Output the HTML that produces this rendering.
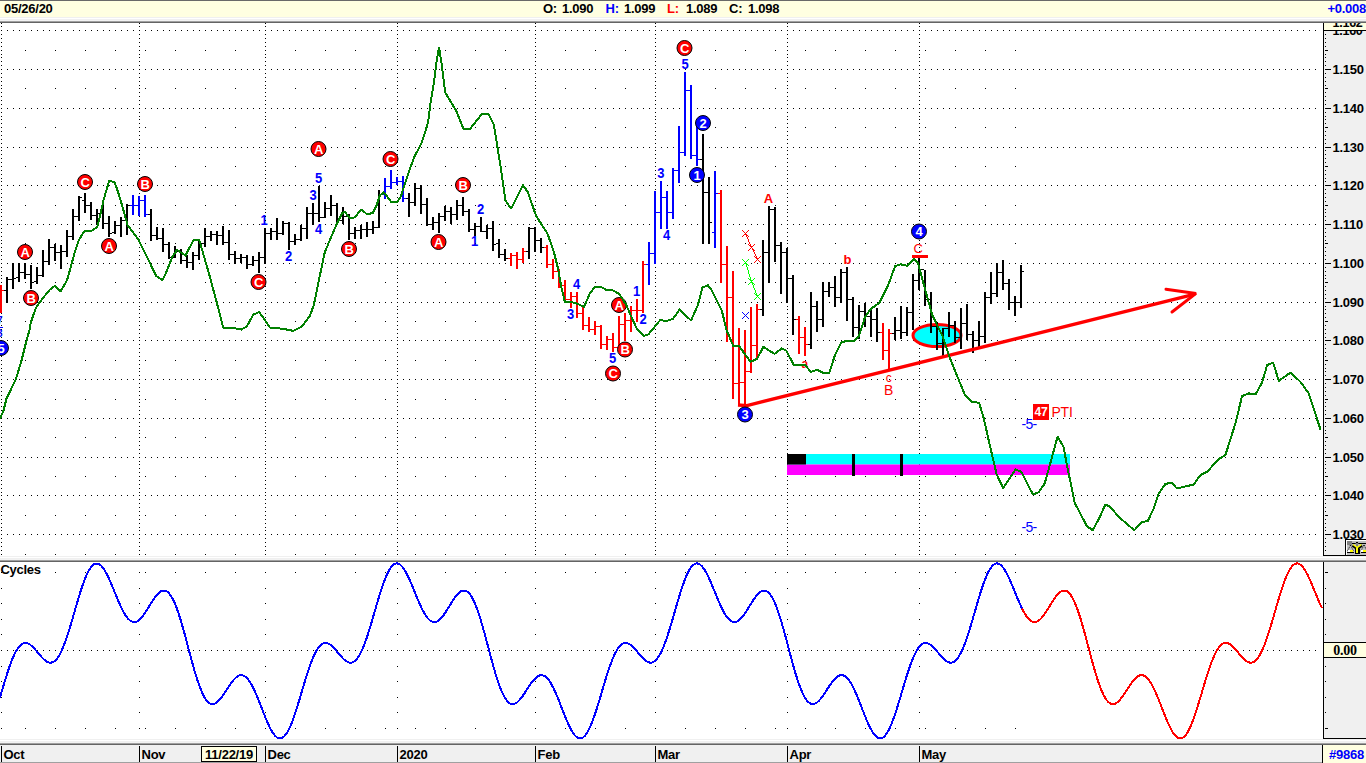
<!DOCTYPE html>
<html><head><meta charset="utf-8"><title>Chart</title>
<style>
html,body{margin:0;padding:0;background:#fff;}
body{width:1366px;height:763px;position:relative;overflow:hidden;font-family:"Liberation Sans",sans-serif;font-size:13px;letter-spacing:-0.25px;font-weight:bold;color:#000;}
.abs{position:absolute;}
#hdr{left:0;top:0;width:1366px;height:17px;background:#ffffe1;border-top:1px solid #696969;box-sizing:border-box;}
#hdr span{position:absolute;top:0.3px;line-height:15px;white-space:pre;}
.sep{position:absolute;left:0;width:1366px;}
.mt{position:absolute;top:746px;width:1px;height:16px;background:#000;}
.ml{position:absolute;top:747px;line-height:16px;}
</style></head><body>
<div id="hdr" class="abs">
<span style="left:4px">05/26/20</span>
<span style="left:543px">O:</span><span style="left:562px">1.090</span>
<span style="left:605.5px;color:#00f">H:</span><span style="left:624px">1.099</span>
<span style="left:667px;color:#f00">L:</span><span style="left:686px">1.089</span>
<span style="left:729px">C:</span><span style="left:748px">1.098</span>
<span style="right:0px;color:#00f">+0.008</span>
</div>
<div class="sep" style="top:17px;height:1px;background:#f0f0f0"></div><div class="sep" style="top:18px;height:1px;background:#fff"></div><div class="sep" style="top:19px;height:1px;background:#f0f0f0"></div><div class="sep" style="top:20px;height:1px;background:#f2f2f2"></div><div class="sep" style="top:21px;height:1px;background:#a0a0a0"></div><div class="sep" style="top:22px;height:1px;background:#646464"></div>
<svg width="1366" height="763" viewBox="0 0 1366 763" style="position:absolute;left:0;top:0" font-family="Liberation Sans, sans-serif"><g shape-rendering="crispEdges"><line x1="1" x2="1316" y1="30.5" y2="30.5" stroke="#000" stroke-width="1" stroke-dasharray="1 5"/><line x1="1" x2="1316" y1="69.5" y2="69.5" stroke="#000" stroke-width="1" stroke-dasharray="1 5"/><line x1="1" x2="1316" y1="108.5" y2="108.5" stroke="#000" stroke-width="1" stroke-dasharray="1 5"/><line x1="1" x2="1316" y1="147.5" y2="147.5" stroke="#000" stroke-width="1" stroke-dasharray="1 5"/><line x1="1" x2="1316" y1="185.5" y2="185.5" stroke="#000" stroke-width="1" stroke-dasharray="1 5"/><line x1="1" x2="1316" y1="224.5" y2="224.5" stroke="#000" stroke-width="1" stroke-dasharray="1 5"/><line x1="1" x2="1316" y1="263.5" y2="263.5" stroke="#000" stroke-width="1" stroke-dasharray="1 5"/><line x1="1" x2="1316" y1="302.5" y2="302.5" stroke="#000" stroke-width="1" stroke-dasharray="1 5"/><line x1="1" x2="1316" y1="340.5" y2="340.5" stroke="#000" stroke-width="1" stroke-dasharray="1 5"/><line x1="1" x2="1316" y1="379.5" y2="379.5" stroke="#000" stroke-width="1" stroke-dasharray="1 5"/><line x1="1" x2="1316" y1="418.5" y2="418.5" stroke="#000" stroke-width="1" stroke-dasharray="1 5"/><line x1="1" x2="1316" y1="457.5" y2="457.5" stroke="#000" stroke-width="1" stroke-dasharray="1 5"/><line x1="1" x2="1316" y1="495.5" y2="495.5" stroke="#000" stroke-width="1" stroke-dasharray="1 5"/><line x1="1" x2="1316" y1="534.5" y2="534.5" stroke="#000" stroke-width="1" stroke-dasharray="1 5"/><line x1="1" x2="1316" y1="650.5" y2="650.5" stroke="#000" stroke-width="1" stroke-dasharray="1 5"/><path d="M1 23h1v1h-1zM1 26h1v1h-1zM1 30h1v1h-1zM1 34h1v1h-1zM1 38h1v1h-1zM1 42h1v1h-1zM1 46h1v1h-1zM1 50h1v1h-1zM1 54h1v1h-1zM1 57h1v1h-1zM1 61h1v1h-1zM1 65h1v1h-1zM1 69h1v1h-1zM1 73h1v1h-1zM1 77h1v1h-1zM1 81h1v1h-1zM1 85h1v1h-1zM1 88h1v1h-1zM1 92h1v1h-1zM1 96h1v1h-1zM1 100h1v1h-1zM1 104h1v1h-1zM1 108h1v1h-1zM1 112h1v1h-1zM1 116h1v1h-1zM1 119h1v1h-1zM1 123h1v1h-1zM1 127h1v1h-1zM1 131h1v1h-1zM1 135h1v1h-1zM1 139h1v1h-1zM1 143h1v1h-1zM1 147h1v1h-1zM1 150h1v1h-1zM1 154h1v1h-1zM1 158h1v1h-1zM1 162h1v1h-1zM1 166h1v1h-1zM1 170h1v1h-1zM1 174h1v1h-1zM1 178h1v1h-1zM1 181h1v1h-1zM1 185h1v1h-1zM1 189h1v1h-1zM1 193h1v1h-1zM1 197h1v1h-1zM1 201h1v1h-1zM1 205h1v1h-1zM1 209h1v1h-1zM1 212h1v1h-1zM1 216h1v1h-1zM1 220h1v1h-1zM1 224h1v1h-1zM1 228h1v1h-1zM1 232h1v1h-1zM1 236h1v1h-1zM1 240h1v1h-1zM1 243h1v1h-1zM1 247h1v1h-1zM1 251h1v1h-1zM1 255h1v1h-1zM1 259h1v1h-1zM1 263h1v1h-1zM1 267h1v1h-1zM1 271h1v1h-1zM1 275h1v1h-1zM1 278h1v1h-1zM1 282h1v1h-1zM1 286h1v1h-1zM1 290h1v1h-1zM1 294h1v1h-1zM1 298h1v1h-1zM1 302h1v1h-1zM1 306h1v1h-1zM1 309h1v1h-1zM1 313h1v1h-1zM1 317h1v1h-1zM1 321h1v1h-1zM1 325h1v1h-1zM1 329h1v1h-1zM1 333h1v1h-1zM1 337h1v1h-1zM1 340h1v1h-1zM1 344h1v1h-1zM1 348h1v1h-1zM1 352h1v1h-1zM1 356h1v1h-1zM1 360h1v1h-1zM1 364h1v1h-1zM1 368h1v1h-1zM1 371h1v1h-1zM1 375h1v1h-1zM1 379h1v1h-1zM1 383h1v1h-1zM1 387h1v1h-1zM1 391h1v1h-1zM1 395h1v1h-1zM1 399h1v1h-1zM1 402h1v1h-1zM1 406h1v1h-1zM1 410h1v1h-1zM1 414h1v1h-1zM1 418h1v1h-1zM1 422h1v1h-1zM1 426h1v1h-1zM1 430h1v1h-1zM1 433h1v1h-1zM1 437h1v1h-1zM1 441h1v1h-1zM1 445h1v1h-1zM1 449h1v1h-1zM1 453h1v1h-1zM1 457h1v1h-1zM1 461h1v1h-1zM1 464h1v1h-1zM1 468h1v1h-1zM1 472h1v1h-1zM1 476h1v1h-1zM1 480h1v1h-1zM1 484h1v1h-1zM1 488h1v1h-1zM1 492h1v1h-1zM1 495h1v1h-1zM1 499h1v1h-1zM1 503h1v1h-1zM1 507h1v1h-1zM1 511h1v1h-1zM1 515h1v1h-1zM1 519h1v1h-1zM1 523h1v1h-1zM1 527h1v1h-1zM1 530h1v1h-1zM1 534h1v1h-1zM1 538h1v1h-1zM1 542h1v1h-1zM1 546h1v1h-1zM1 550h1v1h-1zM1 554h1v1h-1zM1 572h1v1h-1zM1 588h1v1h-1zM1 603h1v1h-1zM1 619h1v1h-1zM1 634h1v1h-1zM1 650h1v1h-1zM1 666h1v1h-1zM1 681h1v1h-1zM1 697h1v1h-1zM1 712h1v1h-1zM1 728h1v1h-1zM139 23h1v1h-1zM139 26h1v1h-1zM139 30h1v1h-1zM139 34h1v1h-1zM139 38h1v1h-1zM139 42h1v1h-1zM139 46h1v1h-1zM139 50h1v1h-1zM139 54h1v1h-1zM139 57h1v1h-1zM139 61h1v1h-1zM139 65h1v1h-1zM139 69h1v1h-1zM139 73h1v1h-1zM139 77h1v1h-1zM139 81h1v1h-1zM139 85h1v1h-1zM139 88h1v1h-1zM139 92h1v1h-1zM139 96h1v1h-1zM139 100h1v1h-1zM139 104h1v1h-1zM139 108h1v1h-1zM139 112h1v1h-1zM139 116h1v1h-1zM139 119h1v1h-1zM139 123h1v1h-1zM139 127h1v1h-1zM139 131h1v1h-1zM139 135h1v1h-1zM139 139h1v1h-1zM139 143h1v1h-1zM139 147h1v1h-1zM139 150h1v1h-1zM139 154h1v1h-1zM139 158h1v1h-1zM139 162h1v1h-1zM139 166h1v1h-1zM139 170h1v1h-1zM139 174h1v1h-1zM139 178h1v1h-1zM139 181h1v1h-1zM139 185h1v1h-1zM139 189h1v1h-1zM139 193h1v1h-1zM139 197h1v1h-1zM139 201h1v1h-1zM139 205h1v1h-1zM139 209h1v1h-1zM139 212h1v1h-1zM139 216h1v1h-1zM139 220h1v1h-1zM139 224h1v1h-1zM139 228h1v1h-1zM139 232h1v1h-1zM139 236h1v1h-1zM139 240h1v1h-1zM139 243h1v1h-1zM139 247h1v1h-1zM139 251h1v1h-1zM139 255h1v1h-1zM139 259h1v1h-1zM139 263h1v1h-1zM139 267h1v1h-1zM139 271h1v1h-1zM139 275h1v1h-1zM139 278h1v1h-1zM139 282h1v1h-1zM139 286h1v1h-1zM139 290h1v1h-1zM139 294h1v1h-1zM139 298h1v1h-1zM139 302h1v1h-1zM139 306h1v1h-1zM139 309h1v1h-1zM139 313h1v1h-1zM139 317h1v1h-1zM139 321h1v1h-1zM139 325h1v1h-1zM139 329h1v1h-1zM139 333h1v1h-1zM139 337h1v1h-1zM139 340h1v1h-1zM139 344h1v1h-1zM139 348h1v1h-1zM139 352h1v1h-1zM139 356h1v1h-1zM139 360h1v1h-1zM139 364h1v1h-1zM139 368h1v1h-1zM139 371h1v1h-1zM139 375h1v1h-1zM139 379h1v1h-1zM139 383h1v1h-1zM139 387h1v1h-1zM139 391h1v1h-1zM139 395h1v1h-1zM139 399h1v1h-1zM139 402h1v1h-1zM139 406h1v1h-1zM139 410h1v1h-1zM139 414h1v1h-1zM139 418h1v1h-1zM139 422h1v1h-1zM139 426h1v1h-1zM139 430h1v1h-1zM139 433h1v1h-1zM139 437h1v1h-1zM139 441h1v1h-1zM139 445h1v1h-1zM139 449h1v1h-1zM139 453h1v1h-1zM139 457h1v1h-1zM139 461h1v1h-1zM139 464h1v1h-1zM139 468h1v1h-1zM139 472h1v1h-1zM139 476h1v1h-1zM139 480h1v1h-1zM139 484h1v1h-1zM139 488h1v1h-1zM139 492h1v1h-1zM139 495h1v1h-1zM139 499h1v1h-1zM139 503h1v1h-1zM139 507h1v1h-1zM139 511h1v1h-1zM139 515h1v1h-1zM139 519h1v1h-1zM139 523h1v1h-1zM139 527h1v1h-1zM139 530h1v1h-1zM139 534h1v1h-1zM139 538h1v1h-1zM139 542h1v1h-1zM139 546h1v1h-1zM139 550h1v1h-1zM139 554h1v1h-1zM139 572h1v1h-1zM139 588h1v1h-1zM139 603h1v1h-1zM139 619h1v1h-1zM139 634h1v1h-1zM139 650h1v1h-1zM139 666h1v1h-1zM139 681h1v1h-1zM139 697h1v1h-1zM139 712h1v1h-1zM139 728h1v1h-1zM265 23h1v1h-1zM265 26h1v1h-1zM265 30h1v1h-1zM265 34h1v1h-1zM265 38h1v1h-1zM265 42h1v1h-1zM265 46h1v1h-1zM265 50h1v1h-1zM265 54h1v1h-1zM265 57h1v1h-1zM265 61h1v1h-1zM265 65h1v1h-1zM265 69h1v1h-1zM265 73h1v1h-1zM265 77h1v1h-1zM265 81h1v1h-1zM265 85h1v1h-1zM265 88h1v1h-1zM265 92h1v1h-1zM265 96h1v1h-1zM265 100h1v1h-1zM265 104h1v1h-1zM265 108h1v1h-1zM265 112h1v1h-1zM265 116h1v1h-1zM265 119h1v1h-1zM265 123h1v1h-1zM265 127h1v1h-1zM265 131h1v1h-1zM265 135h1v1h-1zM265 139h1v1h-1zM265 143h1v1h-1zM265 147h1v1h-1zM265 150h1v1h-1zM265 154h1v1h-1zM265 158h1v1h-1zM265 162h1v1h-1zM265 166h1v1h-1zM265 170h1v1h-1zM265 174h1v1h-1zM265 178h1v1h-1zM265 181h1v1h-1zM265 185h1v1h-1zM265 189h1v1h-1zM265 193h1v1h-1zM265 197h1v1h-1zM265 201h1v1h-1zM265 205h1v1h-1zM265 209h1v1h-1zM265 212h1v1h-1zM265 216h1v1h-1zM265 220h1v1h-1zM265 224h1v1h-1zM265 228h1v1h-1zM265 232h1v1h-1zM265 236h1v1h-1zM265 240h1v1h-1zM265 243h1v1h-1zM265 247h1v1h-1zM265 251h1v1h-1zM265 255h1v1h-1zM265 259h1v1h-1zM265 263h1v1h-1zM265 267h1v1h-1zM265 271h1v1h-1zM265 275h1v1h-1zM265 278h1v1h-1zM265 282h1v1h-1zM265 286h1v1h-1zM265 290h1v1h-1zM265 294h1v1h-1zM265 298h1v1h-1zM265 302h1v1h-1zM265 306h1v1h-1zM265 309h1v1h-1zM265 313h1v1h-1zM265 317h1v1h-1zM265 321h1v1h-1zM265 325h1v1h-1zM265 329h1v1h-1zM265 333h1v1h-1zM265 337h1v1h-1zM265 340h1v1h-1zM265 344h1v1h-1zM265 348h1v1h-1zM265 352h1v1h-1zM265 356h1v1h-1zM265 360h1v1h-1zM265 364h1v1h-1zM265 368h1v1h-1zM265 371h1v1h-1zM265 375h1v1h-1zM265 379h1v1h-1zM265 383h1v1h-1zM265 387h1v1h-1zM265 391h1v1h-1zM265 395h1v1h-1zM265 399h1v1h-1zM265 402h1v1h-1zM265 406h1v1h-1zM265 410h1v1h-1zM265 414h1v1h-1zM265 418h1v1h-1zM265 422h1v1h-1zM265 426h1v1h-1zM265 430h1v1h-1zM265 433h1v1h-1zM265 437h1v1h-1zM265 441h1v1h-1zM265 445h1v1h-1zM265 449h1v1h-1zM265 453h1v1h-1zM265 457h1v1h-1zM265 461h1v1h-1zM265 464h1v1h-1zM265 468h1v1h-1zM265 472h1v1h-1zM265 476h1v1h-1zM265 480h1v1h-1zM265 484h1v1h-1zM265 488h1v1h-1zM265 492h1v1h-1zM265 495h1v1h-1zM265 499h1v1h-1zM265 503h1v1h-1zM265 507h1v1h-1zM265 511h1v1h-1zM265 515h1v1h-1zM265 519h1v1h-1zM265 523h1v1h-1zM265 527h1v1h-1zM265 530h1v1h-1zM265 534h1v1h-1zM265 538h1v1h-1zM265 542h1v1h-1zM265 546h1v1h-1zM265 550h1v1h-1zM265 554h1v1h-1zM265 572h1v1h-1zM265 588h1v1h-1zM265 603h1v1h-1zM265 619h1v1h-1zM265 634h1v1h-1zM265 650h1v1h-1zM265 666h1v1h-1zM265 681h1v1h-1zM265 697h1v1h-1zM265 712h1v1h-1zM265 728h1v1h-1zM397 23h1v1h-1zM397 26h1v1h-1zM397 30h1v1h-1zM397 34h1v1h-1zM397 38h1v1h-1zM397 42h1v1h-1zM397 46h1v1h-1zM397 50h1v1h-1zM397 54h1v1h-1zM397 57h1v1h-1zM397 61h1v1h-1zM397 65h1v1h-1zM397 69h1v1h-1zM397 73h1v1h-1zM397 77h1v1h-1zM397 81h1v1h-1zM397 85h1v1h-1zM397 88h1v1h-1zM397 92h1v1h-1zM397 96h1v1h-1zM397 100h1v1h-1zM397 104h1v1h-1zM397 108h1v1h-1zM397 112h1v1h-1zM397 116h1v1h-1zM397 119h1v1h-1zM397 123h1v1h-1zM397 127h1v1h-1zM397 131h1v1h-1zM397 135h1v1h-1zM397 139h1v1h-1zM397 143h1v1h-1zM397 147h1v1h-1zM397 150h1v1h-1zM397 154h1v1h-1zM397 158h1v1h-1zM397 162h1v1h-1zM397 166h1v1h-1zM397 170h1v1h-1zM397 174h1v1h-1zM397 178h1v1h-1zM397 181h1v1h-1zM397 185h1v1h-1zM397 189h1v1h-1zM397 193h1v1h-1zM397 197h1v1h-1zM397 201h1v1h-1zM397 205h1v1h-1zM397 209h1v1h-1zM397 212h1v1h-1zM397 216h1v1h-1zM397 220h1v1h-1zM397 224h1v1h-1zM397 228h1v1h-1zM397 232h1v1h-1zM397 236h1v1h-1zM397 240h1v1h-1zM397 243h1v1h-1zM397 247h1v1h-1zM397 251h1v1h-1zM397 255h1v1h-1zM397 259h1v1h-1zM397 263h1v1h-1zM397 267h1v1h-1zM397 271h1v1h-1zM397 275h1v1h-1zM397 278h1v1h-1zM397 282h1v1h-1zM397 286h1v1h-1zM397 290h1v1h-1zM397 294h1v1h-1zM397 298h1v1h-1zM397 302h1v1h-1zM397 306h1v1h-1zM397 309h1v1h-1zM397 313h1v1h-1zM397 317h1v1h-1zM397 321h1v1h-1zM397 325h1v1h-1zM397 329h1v1h-1zM397 333h1v1h-1zM397 337h1v1h-1zM397 340h1v1h-1zM397 344h1v1h-1zM397 348h1v1h-1zM397 352h1v1h-1zM397 356h1v1h-1zM397 360h1v1h-1zM397 364h1v1h-1zM397 368h1v1h-1zM397 371h1v1h-1zM397 375h1v1h-1zM397 379h1v1h-1zM397 383h1v1h-1zM397 387h1v1h-1zM397 391h1v1h-1zM397 395h1v1h-1zM397 399h1v1h-1zM397 402h1v1h-1zM397 406h1v1h-1zM397 410h1v1h-1zM397 414h1v1h-1zM397 418h1v1h-1zM397 422h1v1h-1zM397 426h1v1h-1zM397 430h1v1h-1zM397 433h1v1h-1zM397 437h1v1h-1zM397 441h1v1h-1zM397 445h1v1h-1zM397 449h1v1h-1zM397 453h1v1h-1zM397 457h1v1h-1zM397 461h1v1h-1zM397 464h1v1h-1zM397 468h1v1h-1zM397 472h1v1h-1zM397 476h1v1h-1zM397 480h1v1h-1zM397 484h1v1h-1zM397 488h1v1h-1zM397 492h1v1h-1zM397 495h1v1h-1zM397 499h1v1h-1zM397 503h1v1h-1zM397 507h1v1h-1zM397 511h1v1h-1zM397 515h1v1h-1zM397 519h1v1h-1zM397 523h1v1h-1zM397 527h1v1h-1zM397 530h1v1h-1zM397 534h1v1h-1zM397 538h1v1h-1zM397 542h1v1h-1zM397 546h1v1h-1zM397 550h1v1h-1zM397 554h1v1h-1zM397 572h1v1h-1zM397 588h1v1h-1zM397 603h1v1h-1zM397 619h1v1h-1zM397 634h1v1h-1zM397 650h1v1h-1zM397 666h1v1h-1zM397 681h1v1h-1zM397 697h1v1h-1zM397 712h1v1h-1zM397 728h1v1h-1zM535 23h1v1h-1zM535 26h1v1h-1zM535 30h1v1h-1zM535 34h1v1h-1zM535 38h1v1h-1zM535 42h1v1h-1zM535 46h1v1h-1zM535 50h1v1h-1zM535 54h1v1h-1zM535 57h1v1h-1zM535 61h1v1h-1zM535 65h1v1h-1zM535 69h1v1h-1zM535 73h1v1h-1zM535 77h1v1h-1zM535 81h1v1h-1zM535 85h1v1h-1zM535 88h1v1h-1zM535 92h1v1h-1zM535 96h1v1h-1zM535 100h1v1h-1zM535 104h1v1h-1zM535 108h1v1h-1zM535 112h1v1h-1zM535 116h1v1h-1zM535 119h1v1h-1zM535 123h1v1h-1zM535 127h1v1h-1zM535 131h1v1h-1zM535 135h1v1h-1zM535 139h1v1h-1zM535 143h1v1h-1zM535 147h1v1h-1zM535 150h1v1h-1zM535 154h1v1h-1zM535 158h1v1h-1zM535 162h1v1h-1zM535 166h1v1h-1zM535 170h1v1h-1zM535 174h1v1h-1zM535 178h1v1h-1zM535 181h1v1h-1zM535 185h1v1h-1zM535 189h1v1h-1zM535 193h1v1h-1zM535 197h1v1h-1zM535 201h1v1h-1zM535 205h1v1h-1zM535 209h1v1h-1zM535 212h1v1h-1zM535 216h1v1h-1zM535 220h1v1h-1zM535 224h1v1h-1zM535 228h1v1h-1zM535 232h1v1h-1zM535 236h1v1h-1zM535 240h1v1h-1zM535 243h1v1h-1zM535 247h1v1h-1zM535 251h1v1h-1zM535 255h1v1h-1zM535 259h1v1h-1zM535 263h1v1h-1zM535 267h1v1h-1zM535 271h1v1h-1zM535 275h1v1h-1zM535 278h1v1h-1zM535 282h1v1h-1zM535 286h1v1h-1zM535 290h1v1h-1zM535 294h1v1h-1zM535 298h1v1h-1zM535 302h1v1h-1zM535 306h1v1h-1zM535 309h1v1h-1zM535 313h1v1h-1zM535 317h1v1h-1zM535 321h1v1h-1zM535 325h1v1h-1zM535 329h1v1h-1zM535 333h1v1h-1zM535 337h1v1h-1zM535 340h1v1h-1zM535 344h1v1h-1zM535 348h1v1h-1zM535 352h1v1h-1zM535 356h1v1h-1zM535 360h1v1h-1zM535 364h1v1h-1zM535 368h1v1h-1zM535 371h1v1h-1zM535 375h1v1h-1zM535 379h1v1h-1zM535 383h1v1h-1zM535 387h1v1h-1zM535 391h1v1h-1zM535 395h1v1h-1zM535 399h1v1h-1zM535 402h1v1h-1zM535 406h1v1h-1zM535 410h1v1h-1zM535 414h1v1h-1zM535 418h1v1h-1zM535 422h1v1h-1zM535 426h1v1h-1zM535 430h1v1h-1zM535 433h1v1h-1zM535 437h1v1h-1zM535 441h1v1h-1zM535 445h1v1h-1zM535 449h1v1h-1zM535 453h1v1h-1zM535 457h1v1h-1zM535 461h1v1h-1zM535 464h1v1h-1zM535 468h1v1h-1zM535 472h1v1h-1zM535 476h1v1h-1zM535 480h1v1h-1zM535 484h1v1h-1zM535 488h1v1h-1zM535 492h1v1h-1zM535 495h1v1h-1zM535 499h1v1h-1zM535 503h1v1h-1zM535 507h1v1h-1zM535 511h1v1h-1zM535 515h1v1h-1zM535 519h1v1h-1zM535 523h1v1h-1zM535 527h1v1h-1zM535 530h1v1h-1zM535 534h1v1h-1zM535 538h1v1h-1zM535 542h1v1h-1zM535 546h1v1h-1zM535 550h1v1h-1zM535 554h1v1h-1zM535 572h1v1h-1zM535 588h1v1h-1zM535 603h1v1h-1zM535 619h1v1h-1zM535 634h1v1h-1zM535 650h1v1h-1zM535 666h1v1h-1zM535 681h1v1h-1zM535 697h1v1h-1zM535 712h1v1h-1zM535 728h1v1h-1zM655 23h1v1h-1zM655 26h1v1h-1zM655 30h1v1h-1zM655 34h1v1h-1zM655 38h1v1h-1zM655 42h1v1h-1zM655 46h1v1h-1zM655 50h1v1h-1zM655 54h1v1h-1zM655 57h1v1h-1zM655 61h1v1h-1zM655 65h1v1h-1zM655 69h1v1h-1zM655 73h1v1h-1zM655 77h1v1h-1zM655 81h1v1h-1zM655 85h1v1h-1zM655 88h1v1h-1zM655 92h1v1h-1zM655 96h1v1h-1zM655 100h1v1h-1zM655 104h1v1h-1zM655 108h1v1h-1zM655 112h1v1h-1zM655 116h1v1h-1zM655 119h1v1h-1zM655 123h1v1h-1zM655 127h1v1h-1zM655 131h1v1h-1zM655 135h1v1h-1zM655 139h1v1h-1zM655 143h1v1h-1zM655 147h1v1h-1zM655 150h1v1h-1zM655 154h1v1h-1zM655 158h1v1h-1zM655 162h1v1h-1zM655 166h1v1h-1zM655 170h1v1h-1zM655 174h1v1h-1zM655 178h1v1h-1zM655 181h1v1h-1zM655 185h1v1h-1zM655 189h1v1h-1zM655 193h1v1h-1zM655 197h1v1h-1zM655 201h1v1h-1zM655 205h1v1h-1zM655 209h1v1h-1zM655 212h1v1h-1zM655 216h1v1h-1zM655 220h1v1h-1zM655 224h1v1h-1zM655 228h1v1h-1zM655 232h1v1h-1zM655 236h1v1h-1zM655 240h1v1h-1zM655 243h1v1h-1zM655 247h1v1h-1zM655 251h1v1h-1zM655 255h1v1h-1zM655 259h1v1h-1zM655 263h1v1h-1zM655 267h1v1h-1zM655 271h1v1h-1zM655 275h1v1h-1zM655 278h1v1h-1zM655 282h1v1h-1zM655 286h1v1h-1zM655 290h1v1h-1zM655 294h1v1h-1zM655 298h1v1h-1zM655 302h1v1h-1zM655 306h1v1h-1zM655 309h1v1h-1zM655 313h1v1h-1zM655 317h1v1h-1zM655 321h1v1h-1zM655 325h1v1h-1zM655 329h1v1h-1zM655 333h1v1h-1zM655 337h1v1h-1zM655 340h1v1h-1zM655 344h1v1h-1zM655 348h1v1h-1zM655 352h1v1h-1zM655 356h1v1h-1zM655 360h1v1h-1zM655 364h1v1h-1zM655 368h1v1h-1zM655 371h1v1h-1zM655 375h1v1h-1zM655 379h1v1h-1zM655 383h1v1h-1zM655 387h1v1h-1zM655 391h1v1h-1zM655 395h1v1h-1zM655 399h1v1h-1zM655 402h1v1h-1zM655 406h1v1h-1zM655 410h1v1h-1zM655 414h1v1h-1zM655 418h1v1h-1zM655 422h1v1h-1zM655 426h1v1h-1zM655 430h1v1h-1zM655 433h1v1h-1zM655 437h1v1h-1zM655 441h1v1h-1zM655 445h1v1h-1zM655 449h1v1h-1zM655 453h1v1h-1zM655 457h1v1h-1zM655 461h1v1h-1zM655 464h1v1h-1zM655 468h1v1h-1zM655 472h1v1h-1zM655 476h1v1h-1zM655 480h1v1h-1zM655 484h1v1h-1zM655 488h1v1h-1zM655 492h1v1h-1zM655 495h1v1h-1zM655 499h1v1h-1zM655 503h1v1h-1zM655 507h1v1h-1zM655 511h1v1h-1zM655 515h1v1h-1zM655 519h1v1h-1zM655 523h1v1h-1zM655 527h1v1h-1zM655 530h1v1h-1zM655 534h1v1h-1zM655 538h1v1h-1zM655 542h1v1h-1zM655 546h1v1h-1zM655 550h1v1h-1zM655 554h1v1h-1zM655 572h1v1h-1zM655 588h1v1h-1zM655 603h1v1h-1zM655 619h1v1h-1zM655 634h1v1h-1zM655 650h1v1h-1zM655 666h1v1h-1zM655 681h1v1h-1zM655 697h1v1h-1zM655 712h1v1h-1zM655 728h1v1h-1zM787 23h1v1h-1zM787 26h1v1h-1zM787 30h1v1h-1zM787 34h1v1h-1zM787 38h1v1h-1zM787 42h1v1h-1zM787 46h1v1h-1zM787 50h1v1h-1zM787 54h1v1h-1zM787 57h1v1h-1zM787 61h1v1h-1zM787 65h1v1h-1zM787 69h1v1h-1zM787 73h1v1h-1zM787 77h1v1h-1zM787 81h1v1h-1zM787 85h1v1h-1zM787 88h1v1h-1zM787 92h1v1h-1zM787 96h1v1h-1zM787 100h1v1h-1zM787 104h1v1h-1zM787 108h1v1h-1zM787 112h1v1h-1zM787 116h1v1h-1zM787 119h1v1h-1zM787 123h1v1h-1zM787 127h1v1h-1zM787 131h1v1h-1zM787 135h1v1h-1zM787 139h1v1h-1zM787 143h1v1h-1zM787 147h1v1h-1zM787 150h1v1h-1zM787 154h1v1h-1zM787 158h1v1h-1zM787 162h1v1h-1zM787 166h1v1h-1zM787 170h1v1h-1zM787 174h1v1h-1zM787 178h1v1h-1zM787 181h1v1h-1zM787 185h1v1h-1zM787 189h1v1h-1zM787 193h1v1h-1zM787 197h1v1h-1zM787 201h1v1h-1zM787 205h1v1h-1zM787 209h1v1h-1zM787 212h1v1h-1zM787 216h1v1h-1zM787 220h1v1h-1zM787 224h1v1h-1zM787 228h1v1h-1zM787 232h1v1h-1zM787 236h1v1h-1zM787 240h1v1h-1zM787 243h1v1h-1zM787 247h1v1h-1zM787 251h1v1h-1zM787 255h1v1h-1zM787 259h1v1h-1zM787 263h1v1h-1zM787 267h1v1h-1zM787 271h1v1h-1zM787 275h1v1h-1zM787 278h1v1h-1zM787 282h1v1h-1zM787 286h1v1h-1zM787 290h1v1h-1zM787 294h1v1h-1zM787 298h1v1h-1zM787 302h1v1h-1zM787 306h1v1h-1zM787 309h1v1h-1zM787 313h1v1h-1zM787 317h1v1h-1zM787 321h1v1h-1zM787 325h1v1h-1zM787 329h1v1h-1zM787 333h1v1h-1zM787 337h1v1h-1zM787 340h1v1h-1zM787 344h1v1h-1zM787 348h1v1h-1zM787 352h1v1h-1zM787 356h1v1h-1zM787 360h1v1h-1zM787 364h1v1h-1zM787 368h1v1h-1zM787 371h1v1h-1zM787 375h1v1h-1zM787 379h1v1h-1zM787 383h1v1h-1zM787 387h1v1h-1zM787 391h1v1h-1zM787 395h1v1h-1zM787 399h1v1h-1zM787 402h1v1h-1zM787 406h1v1h-1zM787 410h1v1h-1zM787 414h1v1h-1zM787 418h1v1h-1zM787 422h1v1h-1zM787 426h1v1h-1zM787 430h1v1h-1zM787 433h1v1h-1zM787 437h1v1h-1zM787 441h1v1h-1zM787 445h1v1h-1zM787 449h1v1h-1zM787 453h1v1h-1zM787 457h1v1h-1zM787 461h1v1h-1zM787 464h1v1h-1zM787 468h1v1h-1zM787 472h1v1h-1zM787 476h1v1h-1zM787 480h1v1h-1zM787 484h1v1h-1zM787 488h1v1h-1zM787 492h1v1h-1zM787 495h1v1h-1zM787 499h1v1h-1zM787 503h1v1h-1zM787 507h1v1h-1zM787 511h1v1h-1zM787 515h1v1h-1zM787 519h1v1h-1zM787 523h1v1h-1zM787 527h1v1h-1zM787 530h1v1h-1zM787 534h1v1h-1zM787 538h1v1h-1zM787 542h1v1h-1zM787 546h1v1h-1zM787 550h1v1h-1zM787 554h1v1h-1zM787 572h1v1h-1zM787 588h1v1h-1zM787 603h1v1h-1zM787 619h1v1h-1zM787 634h1v1h-1zM787 650h1v1h-1zM787 666h1v1h-1zM787 681h1v1h-1zM787 697h1v1h-1zM787 712h1v1h-1zM787 728h1v1h-1zM919 23h1v1h-1zM919 26h1v1h-1zM919 30h1v1h-1zM919 34h1v1h-1zM919 38h1v1h-1zM919 42h1v1h-1zM919 46h1v1h-1zM919 50h1v1h-1zM919 54h1v1h-1zM919 57h1v1h-1zM919 61h1v1h-1zM919 65h1v1h-1zM919 69h1v1h-1zM919 73h1v1h-1zM919 77h1v1h-1zM919 81h1v1h-1zM919 85h1v1h-1zM919 88h1v1h-1zM919 92h1v1h-1zM919 96h1v1h-1zM919 100h1v1h-1zM919 104h1v1h-1zM919 108h1v1h-1zM919 112h1v1h-1zM919 116h1v1h-1zM919 119h1v1h-1zM919 123h1v1h-1zM919 127h1v1h-1zM919 131h1v1h-1zM919 135h1v1h-1zM919 139h1v1h-1zM919 143h1v1h-1zM919 147h1v1h-1zM919 150h1v1h-1zM919 154h1v1h-1zM919 158h1v1h-1zM919 162h1v1h-1zM919 166h1v1h-1zM919 170h1v1h-1zM919 174h1v1h-1zM919 178h1v1h-1zM919 181h1v1h-1zM919 185h1v1h-1zM919 189h1v1h-1zM919 193h1v1h-1zM919 197h1v1h-1zM919 201h1v1h-1zM919 205h1v1h-1zM919 209h1v1h-1zM919 212h1v1h-1zM919 216h1v1h-1zM919 220h1v1h-1zM919 224h1v1h-1zM919 228h1v1h-1zM919 232h1v1h-1zM919 236h1v1h-1zM919 240h1v1h-1zM919 243h1v1h-1zM919 247h1v1h-1zM919 251h1v1h-1zM919 255h1v1h-1zM919 259h1v1h-1zM919 263h1v1h-1zM919 267h1v1h-1zM919 271h1v1h-1zM919 275h1v1h-1zM919 278h1v1h-1zM919 282h1v1h-1zM919 286h1v1h-1zM919 290h1v1h-1zM919 294h1v1h-1zM919 298h1v1h-1zM919 302h1v1h-1zM919 306h1v1h-1zM919 309h1v1h-1zM919 313h1v1h-1zM919 317h1v1h-1zM919 321h1v1h-1zM919 325h1v1h-1zM919 329h1v1h-1zM919 333h1v1h-1zM919 337h1v1h-1zM919 340h1v1h-1zM919 344h1v1h-1zM919 348h1v1h-1zM919 352h1v1h-1zM919 356h1v1h-1zM919 360h1v1h-1zM919 364h1v1h-1zM919 368h1v1h-1zM919 371h1v1h-1zM919 375h1v1h-1zM919 379h1v1h-1zM919 383h1v1h-1zM919 387h1v1h-1zM919 391h1v1h-1zM919 395h1v1h-1zM919 399h1v1h-1zM919 402h1v1h-1zM919 406h1v1h-1zM919 410h1v1h-1zM919 414h1v1h-1zM919 418h1v1h-1zM919 422h1v1h-1zM919 426h1v1h-1zM919 430h1v1h-1zM919 433h1v1h-1zM919 437h1v1h-1zM919 441h1v1h-1zM919 445h1v1h-1zM919 449h1v1h-1zM919 453h1v1h-1zM919 457h1v1h-1zM919 461h1v1h-1zM919 464h1v1h-1zM919 468h1v1h-1zM919 472h1v1h-1zM919 476h1v1h-1zM919 480h1v1h-1zM919 484h1v1h-1zM919 488h1v1h-1zM919 492h1v1h-1zM919 495h1v1h-1zM919 499h1v1h-1zM919 503h1v1h-1zM919 507h1v1h-1zM919 511h1v1h-1zM919 515h1v1h-1zM919 519h1v1h-1zM919 523h1v1h-1zM919 527h1v1h-1zM919 530h1v1h-1zM919 534h1v1h-1zM919 538h1v1h-1zM919 542h1v1h-1zM919 546h1v1h-1zM919 550h1v1h-1zM919 554h1v1h-1zM919 572h1v1h-1zM919 588h1v1h-1zM919 603h1v1h-1zM919 619h1v1h-1zM919 634h1v1h-1zM919 650h1v1h-1zM919 666h1v1h-1zM919 681h1v1h-1zM919 697h1v1h-1zM919 712h1v1h-1zM919 728h1v1h-1zM25 50h1v1h-1zM25 88h1v1h-1zM25 127h1v1h-1zM25 166h1v1h-1zM25 205h1v1h-1zM25 243h1v1h-1zM25 282h1v1h-1zM25 321h1v1h-1zM25 360h1v1h-1zM25 399h1v1h-1zM25 437h1v1h-1zM25 476h1v1h-1zM25 515h1v1h-1zM25 554h1v1h-1zM25 572h1v1h-1zM25 728h1v1h-1zM55 50h1v1h-1zM55 88h1v1h-1zM55 127h1v1h-1zM55 166h1v1h-1zM55 205h1v1h-1zM55 243h1v1h-1zM55 282h1v1h-1zM55 321h1v1h-1zM55 360h1v1h-1zM55 399h1v1h-1zM55 437h1v1h-1zM55 476h1v1h-1zM55 515h1v1h-1zM55 554h1v1h-1zM55 572h1v1h-1zM55 728h1v1h-1zM85 50h1v1h-1zM85 88h1v1h-1zM85 127h1v1h-1zM85 166h1v1h-1zM85 205h1v1h-1zM85 243h1v1h-1zM85 282h1v1h-1zM85 321h1v1h-1zM85 360h1v1h-1zM85 399h1v1h-1zM85 437h1v1h-1zM85 476h1v1h-1zM85 515h1v1h-1zM85 554h1v1h-1zM85 572h1v1h-1zM85 728h1v1h-1zM115 50h1v1h-1zM115 88h1v1h-1zM115 127h1v1h-1zM115 166h1v1h-1zM115 205h1v1h-1zM115 243h1v1h-1zM115 282h1v1h-1zM115 321h1v1h-1zM115 360h1v1h-1zM115 399h1v1h-1zM115 437h1v1h-1zM115 476h1v1h-1zM115 515h1v1h-1zM115 554h1v1h-1zM115 572h1v1h-1zM115 728h1v1h-1zM145 50h1v1h-1zM145 88h1v1h-1zM145 127h1v1h-1zM145 166h1v1h-1zM145 205h1v1h-1zM145 243h1v1h-1zM145 282h1v1h-1zM145 321h1v1h-1zM145 360h1v1h-1zM145 399h1v1h-1zM145 437h1v1h-1zM145 476h1v1h-1zM145 515h1v1h-1zM145 554h1v1h-1zM145 572h1v1h-1zM145 728h1v1h-1zM175 50h1v1h-1zM175 88h1v1h-1zM175 127h1v1h-1zM175 166h1v1h-1zM175 205h1v1h-1zM175 243h1v1h-1zM175 282h1v1h-1zM175 321h1v1h-1zM175 360h1v1h-1zM175 399h1v1h-1zM175 437h1v1h-1zM175 476h1v1h-1zM175 515h1v1h-1zM175 554h1v1h-1zM175 572h1v1h-1zM175 728h1v1h-1zM205 50h1v1h-1zM205 88h1v1h-1zM205 127h1v1h-1zM205 166h1v1h-1zM205 205h1v1h-1zM205 243h1v1h-1zM205 282h1v1h-1zM205 321h1v1h-1zM205 360h1v1h-1zM205 399h1v1h-1zM205 437h1v1h-1zM205 476h1v1h-1zM205 515h1v1h-1zM205 554h1v1h-1zM205 572h1v1h-1zM205 728h1v1h-1zM235 50h1v1h-1zM235 88h1v1h-1zM235 127h1v1h-1zM235 166h1v1h-1zM235 205h1v1h-1zM235 243h1v1h-1zM235 282h1v1h-1zM235 321h1v1h-1zM235 360h1v1h-1zM235 399h1v1h-1zM235 437h1v1h-1zM235 476h1v1h-1zM235 515h1v1h-1zM235 554h1v1h-1zM235 572h1v1h-1zM235 728h1v1h-1zM265 50h1v1h-1zM265 88h1v1h-1zM265 127h1v1h-1zM265 166h1v1h-1zM265 205h1v1h-1zM265 243h1v1h-1zM265 282h1v1h-1zM265 321h1v1h-1zM265 360h1v1h-1zM265 399h1v1h-1zM265 437h1v1h-1zM265 476h1v1h-1zM265 515h1v1h-1zM265 554h1v1h-1zM265 572h1v1h-1zM265 728h1v1h-1zM295 50h1v1h-1zM295 88h1v1h-1zM295 127h1v1h-1zM295 166h1v1h-1zM295 205h1v1h-1zM295 243h1v1h-1zM295 282h1v1h-1zM295 321h1v1h-1zM295 360h1v1h-1zM295 399h1v1h-1zM295 437h1v1h-1zM295 476h1v1h-1zM295 515h1v1h-1zM295 554h1v1h-1zM295 572h1v1h-1zM295 728h1v1h-1zM325 50h1v1h-1zM325 88h1v1h-1zM325 127h1v1h-1zM325 166h1v1h-1zM325 205h1v1h-1zM325 243h1v1h-1zM325 282h1v1h-1zM325 321h1v1h-1zM325 360h1v1h-1zM325 399h1v1h-1zM325 437h1v1h-1zM325 476h1v1h-1zM325 515h1v1h-1zM325 554h1v1h-1zM325 572h1v1h-1zM325 728h1v1h-1zM355 50h1v1h-1zM355 88h1v1h-1zM355 127h1v1h-1zM355 166h1v1h-1zM355 205h1v1h-1zM355 243h1v1h-1zM355 282h1v1h-1zM355 321h1v1h-1zM355 360h1v1h-1zM355 399h1v1h-1zM355 437h1v1h-1zM355 476h1v1h-1zM355 515h1v1h-1zM355 554h1v1h-1zM355 572h1v1h-1zM355 728h1v1h-1zM385 50h1v1h-1zM385 88h1v1h-1zM385 127h1v1h-1zM385 166h1v1h-1zM385 205h1v1h-1zM385 243h1v1h-1zM385 282h1v1h-1zM385 321h1v1h-1zM385 360h1v1h-1zM385 399h1v1h-1zM385 437h1v1h-1zM385 476h1v1h-1zM385 515h1v1h-1zM385 554h1v1h-1zM385 572h1v1h-1zM385 728h1v1h-1zM415 50h1v1h-1zM415 88h1v1h-1zM415 127h1v1h-1zM415 166h1v1h-1zM415 205h1v1h-1zM415 243h1v1h-1zM415 282h1v1h-1zM415 321h1v1h-1zM415 360h1v1h-1zM415 399h1v1h-1zM415 437h1v1h-1zM415 476h1v1h-1zM415 515h1v1h-1zM415 554h1v1h-1zM415 572h1v1h-1zM415 728h1v1h-1zM445 50h1v1h-1zM445 88h1v1h-1zM445 127h1v1h-1zM445 166h1v1h-1zM445 205h1v1h-1zM445 243h1v1h-1zM445 282h1v1h-1zM445 321h1v1h-1zM445 360h1v1h-1zM445 399h1v1h-1zM445 437h1v1h-1zM445 476h1v1h-1zM445 515h1v1h-1zM445 554h1v1h-1zM445 572h1v1h-1zM445 728h1v1h-1zM475 50h1v1h-1zM475 88h1v1h-1zM475 127h1v1h-1zM475 166h1v1h-1zM475 205h1v1h-1zM475 243h1v1h-1zM475 282h1v1h-1zM475 321h1v1h-1zM475 360h1v1h-1zM475 399h1v1h-1zM475 437h1v1h-1zM475 476h1v1h-1zM475 515h1v1h-1zM475 554h1v1h-1zM475 572h1v1h-1zM475 728h1v1h-1zM505 50h1v1h-1zM505 88h1v1h-1zM505 127h1v1h-1zM505 166h1v1h-1zM505 205h1v1h-1zM505 243h1v1h-1zM505 282h1v1h-1zM505 321h1v1h-1zM505 360h1v1h-1zM505 399h1v1h-1zM505 437h1v1h-1zM505 476h1v1h-1zM505 515h1v1h-1zM505 554h1v1h-1zM505 572h1v1h-1zM505 728h1v1h-1zM535 50h1v1h-1zM535 88h1v1h-1zM535 127h1v1h-1zM535 166h1v1h-1zM535 205h1v1h-1zM535 243h1v1h-1zM535 282h1v1h-1zM535 321h1v1h-1zM535 360h1v1h-1zM535 399h1v1h-1zM535 437h1v1h-1zM535 476h1v1h-1zM535 515h1v1h-1zM535 554h1v1h-1zM535 572h1v1h-1zM535 728h1v1h-1zM565 50h1v1h-1zM565 88h1v1h-1zM565 127h1v1h-1zM565 166h1v1h-1zM565 205h1v1h-1zM565 243h1v1h-1zM565 282h1v1h-1zM565 321h1v1h-1zM565 360h1v1h-1zM565 399h1v1h-1zM565 437h1v1h-1zM565 476h1v1h-1zM565 515h1v1h-1zM565 554h1v1h-1zM565 572h1v1h-1zM565 728h1v1h-1zM595 50h1v1h-1zM595 88h1v1h-1zM595 127h1v1h-1zM595 166h1v1h-1zM595 205h1v1h-1zM595 243h1v1h-1zM595 282h1v1h-1zM595 321h1v1h-1zM595 360h1v1h-1zM595 399h1v1h-1zM595 437h1v1h-1zM595 476h1v1h-1zM595 515h1v1h-1zM595 554h1v1h-1zM595 572h1v1h-1zM595 728h1v1h-1zM625 50h1v1h-1zM625 88h1v1h-1zM625 127h1v1h-1zM625 166h1v1h-1zM625 205h1v1h-1zM625 243h1v1h-1zM625 282h1v1h-1zM625 321h1v1h-1zM625 360h1v1h-1zM625 399h1v1h-1zM625 437h1v1h-1zM625 476h1v1h-1zM625 515h1v1h-1zM625 554h1v1h-1zM625 572h1v1h-1zM625 728h1v1h-1zM655 50h1v1h-1zM655 88h1v1h-1zM655 127h1v1h-1zM655 166h1v1h-1zM655 205h1v1h-1zM655 243h1v1h-1zM655 282h1v1h-1zM655 321h1v1h-1zM655 360h1v1h-1zM655 399h1v1h-1zM655 437h1v1h-1zM655 476h1v1h-1zM655 515h1v1h-1zM655 554h1v1h-1zM655 572h1v1h-1zM655 728h1v1h-1zM685 50h1v1h-1zM685 88h1v1h-1zM685 127h1v1h-1zM685 166h1v1h-1zM685 205h1v1h-1zM685 243h1v1h-1zM685 282h1v1h-1zM685 321h1v1h-1zM685 360h1v1h-1zM685 399h1v1h-1zM685 437h1v1h-1zM685 476h1v1h-1zM685 515h1v1h-1zM685 554h1v1h-1zM685 572h1v1h-1zM685 728h1v1h-1zM715 50h1v1h-1zM715 88h1v1h-1zM715 127h1v1h-1zM715 166h1v1h-1zM715 205h1v1h-1zM715 243h1v1h-1zM715 282h1v1h-1zM715 321h1v1h-1zM715 360h1v1h-1zM715 399h1v1h-1zM715 437h1v1h-1zM715 476h1v1h-1zM715 515h1v1h-1zM715 554h1v1h-1zM715 572h1v1h-1zM715 728h1v1h-1zM745 50h1v1h-1zM745 88h1v1h-1zM745 127h1v1h-1zM745 166h1v1h-1zM745 205h1v1h-1zM745 243h1v1h-1zM745 282h1v1h-1zM745 321h1v1h-1zM745 360h1v1h-1zM745 399h1v1h-1zM745 437h1v1h-1zM745 476h1v1h-1zM745 515h1v1h-1zM745 554h1v1h-1zM745 572h1v1h-1zM745 728h1v1h-1zM775 50h1v1h-1zM775 88h1v1h-1zM775 127h1v1h-1zM775 166h1v1h-1zM775 205h1v1h-1zM775 243h1v1h-1zM775 282h1v1h-1zM775 321h1v1h-1zM775 360h1v1h-1zM775 399h1v1h-1zM775 437h1v1h-1zM775 476h1v1h-1zM775 515h1v1h-1zM775 554h1v1h-1zM775 572h1v1h-1zM775 728h1v1h-1zM805 50h1v1h-1zM805 88h1v1h-1zM805 127h1v1h-1zM805 166h1v1h-1zM805 205h1v1h-1zM805 243h1v1h-1zM805 282h1v1h-1zM805 321h1v1h-1zM805 360h1v1h-1zM805 399h1v1h-1zM805 437h1v1h-1zM805 476h1v1h-1zM805 515h1v1h-1zM805 554h1v1h-1zM805 572h1v1h-1zM805 728h1v1h-1zM835 50h1v1h-1zM835 88h1v1h-1zM835 127h1v1h-1zM835 166h1v1h-1zM835 205h1v1h-1zM835 243h1v1h-1zM835 282h1v1h-1zM835 321h1v1h-1zM835 360h1v1h-1zM835 399h1v1h-1zM835 437h1v1h-1zM835 476h1v1h-1zM835 515h1v1h-1zM835 554h1v1h-1zM835 572h1v1h-1zM835 728h1v1h-1zM865 50h1v1h-1zM865 88h1v1h-1zM865 127h1v1h-1zM865 166h1v1h-1zM865 205h1v1h-1zM865 243h1v1h-1zM865 282h1v1h-1zM865 321h1v1h-1zM865 360h1v1h-1zM865 399h1v1h-1zM865 437h1v1h-1zM865 476h1v1h-1zM865 515h1v1h-1zM865 554h1v1h-1zM865 572h1v1h-1zM865 728h1v1h-1zM895 50h1v1h-1zM895 88h1v1h-1zM895 127h1v1h-1zM895 166h1v1h-1zM895 205h1v1h-1zM895 243h1v1h-1zM895 282h1v1h-1zM895 321h1v1h-1zM895 360h1v1h-1zM895 399h1v1h-1zM895 437h1v1h-1zM895 476h1v1h-1zM895 515h1v1h-1zM895 554h1v1h-1zM895 572h1v1h-1zM895 728h1v1h-1zM925 50h1v1h-1zM925 88h1v1h-1zM925 127h1v1h-1zM925 166h1v1h-1zM925 205h1v1h-1zM925 243h1v1h-1zM925 282h1v1h-1zM925 321h1v1h-1zM925 360h1v1h-1zM925 399h1v1h-1zM925 437h1v1h-1zM925 476h1v1h-1zM925 515h1v1h-1zM925 554h1v1h-1zM925 572h1v1h-1zM925 728h1v1h-1zM955 50h1v1h-1zM955 88h1v1h-1zM955 127h1v1h-1zM955 166h1v1h-1zM955 205h1v1h-1zM955 243h1v1h-1zM955 282h1v1h-1zM955 321h1v1h-1zM955 360h1v1h-1zM955 399h1v1h-1zM955 437h1v1h-1zM955 476h1v1h-1zM955 515h1v1h-1zM955 554h1v1h-1zM955 572h1v1h-1zM955 728h1v1h-1zM985 50h1v1h-1zM985 88h1v1h-1zM985 127h1v1h-1zM985 166h1v1h-1zM985 205h1v1h-1zM985 243h1v1h-1zM985 282h1v1h-1zM985 321h1v1h-1zM985 360h1v1h-1zM985 399h1v1h-1zM985 437h1v1h-1zM985 476h1v1h-1zM985 515h1v1h-1zM985 554h1v1h-1zM985 572h1v1h-1zM985 728h1v1h-1zM1015 50h1v1h-1zM1015 88h1v1h-1zM1015 127h1v1h-1zM1015 166h1v1h-1zM1015 205h1v1h-1zM1015 243h1v1h-1zM1015 282h1v1h-1zM1015 321h1v1h-1zM1015 360h1v1h-1zM1015 399h1v1h-1zM1015 437h1v1h-1zM1015 476h1v1h-1zM1015 515h1v1h-1zM1015 554h1v1h-1zM1015 572h1v1h-1zM1015 728h1v1h-1z" fill="#000"/></g><rect x="787" y="454" width="283" height="10.5" fill="#0ff"/><rect x="787" y="464.5" width="283" height="10.5" fill="#f0f"/><rect x="787" y="454" width="19" height="10.5" fill="#000"/><g shape-rendering="crispEdges"><path d="M853.5 455V475M901.5 455V475" stroke="#000" stroke-width="3" stroke-linecap="round"/></g><ellipse cx="937" cy="335.5" rx="24" ry="11" fill="#0ff" stroke="#f00" stroke-width="3"/><g shape-rendering="crispEdges"><path d="M6 277h2V303h-2zM4 290h2v1h-2zM8 279h2v1h-2zM12 263h2V289h-2zM10 279h2v1h-2zM14 278h2v1h-2zM18 263h2V282h-2zM16 277h2v1h-2zM20 272h2v1h-2zM24 263h2V279h-2zM22 272h2v1h-2zM26 274h2v1h-2zM30 265h2V289h-2zM28 274h2v1h-2zM32 282h2v1h-2zM36 267h2V284h-2zM34 281h2v1h-2zM38 275h2v1h-2zM42 250h2V277h-2zM40 275h2v1h-2zM44 261h2v1h-2zM48 239h2V265h-2zM46 261h2v1h-2zM50 247h2v1h-2zM54 244h2V261h-2zM52 247h2v1h-2zM56 252h2v1h-2zM60 245h2V269h-2zM58 252h2v1h-2zM62 251h2v1h-2zM66 230h2V257h-2zM64 251h2v1h-2zM68 236h2v1h-2zM72 209h2V240h-2zM70 236h2v1h-2zM74 216h2v1h-2zM78 196h2V221h-2zM76 216h2v1h-2zM80 197h2v1h-2zM84 193h2V213h-2zM82 200h2v1h-2zM86 205h2v1h-2zM90 202h2V220h-2zM88 205h2v1h-2zM92 215h2v1h-2zM96 209h2V225h-2zM94 215h2v1h-2zM98 213h2v1h-2zM102 200h2V229h-2zM100 213h2v1h-2zM104 223h2v1h-2zM108 216h2V237h-2zM106 223h2v1h-2zM110 233h2v1h-2zM114 221h2V234h-2zM112 232h2v1h-2zM116 225h2v1h-2zM120 217h2V237h-2zM118 225h2v1h-2zM122 220h2v1h-2zM126 204h2V235h-2zM124 220h2v1h-2zM128 205h2v1h-2zM150 209h2V241h-2zM148 214h2v1h-2zM152 235h2v1h-2zM156 227h2V240h-2zM154 235h2v1h-2zM158 238h2v1h-2zM162 228h2V252h-2zM160 238h2v1h-2zM164 244h2v1h-2zM168 242h2V259h-2zM166 244h2v1h-2zM170 257h2v1h-2zM174 246h2V258h-2zM172 257h2v1h-2zM176 251h2v1h-2zM180 249h2V264h-2zM178 251h2v1h-2zM182 260h2v1h-2zM186 255h2V268h-2zM184 260h2v1h-2zM188 262h2v1h-2zM192 252h2V270h-2zM190 262h2v1h-2zM194 255h2v1h-2zM198 241h2V260h-2zM196 255h2v1h-2zM200 243h2v1h-2zM204 228h2V247h-2zM202 243h2v1h-2zM206 236h2v1h-2zM210 231h2V241h-2zM208 236h2v1h-2zM212 234h2v1h-2zM216 231h2V245h-2zM214 234h2v1h-2zM218 235h2v1h-2zM222 226h2V245h-2zM220 235h2v1h-2zM224 242h2v1h-2zM228 230h2V260h-2zM226 242h2v1h-2zM230 254h2v1h-2zM234 251h2V264h-2zM232 254h2v1h-2zM236 258h2v1h-2zM240 254h2V263h-2zM238 258h2v1h-2zM242 257h2v1h-2zM246 255h2V269h-2zM244 257h2v1h-2zM248 264h2v1h-2zM252 256h2V266h-2zM250 264h2v1h-2zM254 260h2v1h-2zM258 252h2V273h-2zM256 260h2v1h-2zM260 257h2v1h-2zM264 228h2V264h-2zM262 257h2v1h-2zM266 233h2v1h-2zM270 228h2V240h-2zM268 233h2v1h-2zM272 231h2v1h-2zM276 218h2V240h-2zM274 231h2v1h-2zM278 233h2v1h-2zM282 221h2V235h-2zM280 233h2v1h-2zM284 223h2v1h-2zM288 222h2V250h-2zM286 223h2v1h-2zM290 241h2v1h-2zM294 234h2V245h-2zM292 241h2v1h-2zM296 239h2v1h-2zM300 225h2V241h-2zM298 239h2v1h-2zM302 228h2v1h-2zM306 207h2V239h-2zM304 228h2v1h-2zM308 213h2v1h-2zM312 203h2V225h-2zM310 213h2v1h-2zM314 213h2v1h-2zM318 186h2V222h-2zM316 213h2v1h-2zM320 217h2v1h-2zM324 202h2V218h-2zM322 217h2v1h-2zM326 208h2v1h-2zM330 195h2V216h-2zM328 208h2v1h-2zM332 205h2v1h-2zM336 203h2V222h-2zM334 205h2v1h-2zM338 220h2v1h-2zM342 207h2V224h-2zM340 220h2v1h-2zM344 216h2v1h-2zM348 214h2V240h-2zM346 216h2v1h-2zM350 233h2v1h-2zM354 227h2V239h-2zM352 233h2v1h-2zM356 230h2v1h-2zM360 225h2V239h-2zM358 230h2v1h-2zM362 229h2v1h-2zM366 222h2V237h-2zM364 229h2v1h-2zM368 229h2v1h-2zM372 221h2V234h-2zM370 229h2v1h-2zM374 227h2v1h-2zM378 190h2V228h-2zM376 227h2v1h-2zM380 194h2v1h-2zM408 193h2V217h-2zM406 198h2v1h-2zM410 202h2v1h-2zM414 183h2V206h-2zM412 202h2v1h-2zM416 188h2v1h-2zM420 185h2V214h-2zM418 188h2v1h-2zM422 204h2v1h-2zM426 198h2V226h-2zM424 204h2v1h-2zM428 224h2v1h-2zM432 217h2V230h-2zM430 224h2v1h-2zM434 222h2v1h-2zM438 213h2V233h-2zM436 222h2v1h-2zM440 216h2v1h-2zM444 206h2V221h-2zM442 216h2v1h-2zM446 211h2v1h-2zM450 207h2V224h-2zM448 211h2v1h-2zM452 214h2v1h-2zM456 200h2V220h-2zM454 214h2v1h-2zM458 205h2v1h-2zM462 197h2V216h-2zM460 205h2v1h-2zM464 211h2v1h-2zM468 209h2V232h-2zM466 211h2v1h-2zM470 229h2v1h-2zM474 223h2V236h-2zM472 229h2v1h-2zM476 226h2v1h-2zM480 217h2V232h-2zM478 226h2v1h-2zM482 231h2v1h-2zM486 225h2V239h-2zM484 231h2v1h-2zM488 228h2v1h-2zM492 221h2V251h-2zM490 228h2v1h-2zM494 244h2v1h-2zM498 239h2V258h-2zM496 243h2v1h-2zM500 254h2v1h-2zM504 249h2V261h-2zM502 254h2v1h-2zM506 258h2v1h-2zM528 227h2V259h-2zM526 251h2v1h-2zM530 228h2v1h-2zM534 227h2V252h-2zM532 228h2v1h-2zM536 240h2v1h-2zM540 238h2V253h-2zM538 240h2v1h-2zM542 247h2v1h-2zM702 134h2V244h-2zM700 159h2v1h-2zM704 192h2v1h-2zM708 177h2V244h-2zM706 192h2v1h-2zM710 222h2v1h-2zM762 240h2V316h-2zM760 309h2v1h-2zM764 252h2v1h-2zM768 206h2V283h-2zM766 252h2v1h-2zM770 209h2v1h-2zM774 207h2V262h-2zM772 209h2v1h-2zM776 245h2v1h-2zM780 242h2V294h-2zM778 245h2v1h-2zM782 252h2v1h-2zM786 248h2V303h-2zM784 252h2v1h-2zM788 278h2v1h-2zM792 275h2V335h-2zM790 278h2v1h-2zM794 319h2v1h-2zM810 292h2V349h-2zM808 344h2v1h-2zM812 306h2v1h-2zM816 301h2V332h-2zM814 306h2v1h-2zM818 319h2v1h-2zM822 282h2V327h-2zM820 319h2v1h-2zM824 291h2v1h-2zM828 282h2V297h-2zM826 291h2v1h-2zM830 287h2v1h-2zM834 276h2V307h-2zM832 287h2v1h-2zM836 297h2v1h-2zM840 269h2V303h-2zM838 297h2v1h-2zM842 272h2v1h-2zM846 267h2V321h-2zM844 272h2v1h-2zM848 299h2v1h-2zM852 297h2V337h-2zM850 299h2v1h-2zM854 327h2v1h-2zM858 305h2V339h-2zM856 327h2v1h-2zM860 311h2v1h-2zM864 303h2V327h-2zM862 311h2v1h-2zM866 316h2v1h-2zM870 309h2V337h-2zM868 316h2v1h-2zM872 319h2v1h-2zM876 308h2V342h-2zM874 319h2v1h-2zM878 332h2v1h-2zM894 317h2V340h-2zM892 333h2v1h-2zM896 330h2v1h-2zM900 306h2V339h-2zM898 330h2v1h-2zM902 332h2v1h-2zM906 307h2V336h-2zM904 332h2v1h-2zM908 312h2v1h-2zM912 274h2V330h-2zM910 312h2v1h-2zM914 280h2v1h-2zM918 256h2V290h-2zM916 280h2v1h-2zM920 269h2v1h-2zM924 270h2V306h-2zM922 269h2v1h-2zM926 299h2v1h-2zM930 292h2V333h-2zM928 299h2v1h-2zM932 326h2v1h-2zM936 322h2V350h-2zM934 326h2v1h-2zM938 343h2v1h-2zM942 328h2V356h-2zM940 343h2v1h-2zM944 328h2v1h-2zM948 312h2V337h-2zM946 328h2v1h-2zM950 325h2v1h-2zM954 321h2V343h-2zM952 325h2v1h-2zM956 337h2v1h-2zM960 308h2V349h-2zM958 337h2v1h-2zM962 323h2v1h-2zM966 304h2V340h-2zM964 323h2v1h-2zM968 334h2v1h-2zM972 331h2V353h-2zM970 334h2v1h-2zM974 340h2v1h-2zM978 321h2V347h-2zM976 340h2v1h-2zM980 336h2v1h-2zM984 292h2V343h-2zM982 336h2v1h-2zM986 297h2v1h-2zM990 272h2V304h-2zM988 297h2v1h-2zM992 293h2v1h-2zM996 263h2V297h-2zM994 293h2v1h-2zM998 272h2v1h-2zM1002 260h2V290h-2zM1000 272h2v1h-2zM1004 283h2v1h-2zM1008 279h2V310h-2zM1006 283h2v1h-2zM1010 302h2v1h-2zM1014 296h2V316h-2zM1012 302h2v1h-2zM1016 302h2v1h-2zM1020 265h2V308h-2zM1018 302h2v1h-2zM1022 271h2v1h-2z" fill="#000"/><path d="M0 285h2V313h-2zM-2 286h2v1h-2zM2 290h2v1h-2zM510 253h2V266h-2zM508 258h2v1h-2zM512 255h2v1h-2zM516 252h2V269h-2zM514 255h2v1h-2zM518 259h2v1h-2zM522 248h2V263h-2zM520 259h2v1h-2zM524 251h2v1h-2zM546 245h2V268h-2zM544 247h2v1h-2zM548 264h2v1h-2zM552 259h2V279h-2zM550 264h2v1h-2zM554 271h2v1h-2zM558 269h2V288h-2zM556 271h2v1h-2zM560 285h2v1h-2zM564 280h2V302h-2zM562 285h2v1h-2zM566 299h2v1h-2zM570 292h2V308h-2zM568 299h2v1h-2zM572 296h2v1h-2zM576 292h2V318h-2zM574 296h2v1h-2zM578 313h2v1h-2zM582 306h2V330h-2zM580 313h2v1h-2zM584 325h2v1h-2zM588 317h2V332h-2zM586 325h2v1h-2zM590 329h2v1h-2zM594 321h2V335h-2zM592 329h2v1h-2zM596 326h2v1h-2zM600 325h2V349h-2zM598 326h2v1h-2zM602 344h2v1h-2zM606 336h2V350h-2zM604 344h2v1h-2zM608 339h2v1h-2zM612 333h2V352h-2zM610 339h2v1h-2zM614 347h2v1h-2zM618 316h2V352h-2zM616 347h2v1h-2zM620 324h2v1h-2zM624 313h2V341h-2zM622 324h2v1h-2zM626 320h2v1h-2zM630 306h2V332h-2zM628 320h2v1h-2zM632 310h2v1h-2zM636 299h2V322h-2zM634 310h2v1h-2zM638 310h2v1h-2zM642 261h2V313h-2zM640 310h2v1h-2zM644 264h2v1h-2zM720 190h2V283h-2zM718 193h2v1h-2zM722 264h2v1h-2zM726 246h2V342h-2zM724 264h2v1h-2zM728 297h2v1h-2zM732 271h2V399h-2zM730 297h2v1h-2zM734 383h2v1h-2zM738 328h2V406h-2zM736 383h2v1h-2zM740 382h2v1h-2zM744 330h2V406h-2zM742 382h2v1h-2zM746 371h2v1h-2zM750 307h2V373h-2zM748 371h2v1h-2zM752 345h2v1h-2zM756 304h2V358h-2zM754 345h2v1h-2zM758 309h2v1h-2zM798 316h2V354h-2zM796 319h2v1h-2zM800 337h2v1h-2zM804 327h2V356h-2zM802 337h2v1h-2zM806 344h2v1h-2zM882 323h2V360h-2zM880 332h2v1h-2zM884 350h2v1h-2zM888 329h2V371h-2zM886 350h2v1h-2zM890 333h2v1h-2z" fill="#f00"/><path d="M132 195h2V215h-2zM130 205h2v1h-2zM134 205h2v1h-2zM138 196h2V216h-2zM136 205h2v1h-2zM140 200h2v1h-2zM144 195h2V217h-2zM142 200h2v1h-2zM146 214h2v1h-2zM384 178h2V199h-2zM382 194h2v1h-2zM386 186h2v1h-2zM390 170h2V189h-2zM388 186h2v1h-2zM392 182h2v1h-2zM396 177h2V185h-2zM394 182h2v1h-2zM398 181h2v1h-2zM402 176h2V202h-2zM400 181h2v1h-2zM404 198h2v1h-2zM648 242h2V285h-2zM646 264h2v1h-2zM650 253h2v1h-2zM654 191h2V264h-2zM652 253h2v1h-2zM656 212h2v1h-2zM660 181h2V229h-2zM658 212h2v1h-2zM662 197h2v1h-2zM666 191h2V229h-2zM664 197h2v1h-2zM668 212h2v1h-2zM672 168h2V219h-2zM670 212h2v1h-2zM674 170h2v1h-2zM678 126h2V183h-2zM676 170h2v1h-2zM680 152h2v1h-2zM684 72h2V156h-2zM682 152h2v1h-2zM686 90h2v1h-2zM690 85h2V159h-2zM688 90h2v1h-2zM692 155h2v1h-2zM696 125h2V166h-2zM694 155h2v1h-2zM698 159h2v1h-2zM714 171h2V248h-2zM712 232h2v1h-2zM716 193h2v1h-2z" fill="#00f"/><rect x="912" y="255" width="16" height="3" fill="#f00"/></g><path d="M738 405 L747 405.6 L1195 294.1" fill="none" stroke="#f00" stroke-width="3.4" stroke-linejoin="miter"/><path d="M1166 289.3 L1196 293.4 L1172 312" fill="none" stroke="#f00" stroke-width="3" stroke-linejoin="bevel" stroke-linecap="round"/><path d="M748 241h1v1h-1zM749 242h1v1h-1zM748 244h1v1h-1zM748 250h1v1h-1zM756 257h1v1h-1zM749 245h1v1h-1zM750 244h1v1h-1zM756 260h1v1h-1zM754 244h1v1h-1zM746 234h1v1h-1zM758 260h1v1h-1zM754 250h1v1h-1zM742 230h1v1h-1zM754 256h1v1h-1zM755 255h1v1h-1zM754 253h1v1h-1zM743 235h1v1h-1zM755 261h1v1h-1zM742 236h1v1h-1zM754 262h1v1h-1zM757 258h1v1h-1zM753 245h1v1h-1zM753 251h1v1h-1zM747 235h1v1h-1zM759 261h1v1h-1zM748 240h1v1h-1zM747 238h1v1h-1zM756 256h1v1h-1zM750 246h1v1h-1zM752 249h1v1h-1zM746 236h1v1h-1zM745 234h1v1h-1zM752 246h1v1h-1zM755 254h1v1h-1zM754 252h1v1h-1zM743 231h1v1h-1zM755 257h1v1h-1zM744 232h1v1h-1zM751 247h1v1h-1zM760 256h1v1h-1zM747 231h1v1h-1zM747 237h1v1h-1zM748 230h1v1h-1zM748 236h1v1h-1zM753 250h1v1h-1zM760 262h1v1h-1zM759 257h1v1h-1zM748 239h1v1h-1zM750 245h1v1h-1zM749 243h1v1h-1zM749 249h1v1h-1zM758 258h1v1h-1zM750 248h1v1h-1zM756 258h1v1h-1zM746 235h1v1h-1zM745 233h1v1h-1zM746 232h1v1h-1zM752 248h1v1h-1zM757 259h1v1h-1zM751 246h1v1h-1zM744 234h1v1h-1zM753 249h1v1h-1z" fill="#f00" shape-rendering="crispEdges"/><path d="M754 284h1v1h-1zM752 284h1v1h-1zM743 260h1v1h-1zM755 292h1v1h-1zM744 261h1v1h-1zM748 259h1v1h-1zM751 282h1v1h-1zM754 293h1v1h-1zM754 299h1v1h-1zM757 295h1v1h-1zM747 260h1v1h-1zM755 298h1v1h-1zM748 265h1v1h-1zM748 271h1v1h-1zM747 269h1v1h-1zM753 285h1v1h-1zM753 279h1v1h-1zM759 298h1v1h-1zM749 275h1v1h-1zM750 280h1v1h-1zM746 261h1v1h-1zM750 277h1v1h-1zM756 293h1v1h-1zM746 264h1v1h-1zM745 262h1v1h-1zM752 280h1v1h-1zM752 283h1v1h-1zM754 289h1v1h-1zM755 294h1v1h-1zM744 263h1v1h-1zM755 291h1v1h-1zM756 297h1v1h-1zM751 281h1v1h-1zM747 268h1v1h-1zM759 294h1v1h-1zM760 293h1v1h-1zM748 273h1v1h-1zM753 287h1v1h-1zM760 299h1v1h-1zM748 270h1v1h-1zM749 274h1v1h-1zM746 263h1v1h-1zM750 282h1v1h-1zM750 279h1v1h-1zM756 295h1v1h-1zM746 266h1v1h-1zM752 282h1v1h-1zM749 283h1v1h-1zM758 295h1v1h-1zM742 259h1v1h-1zM755 290h1v1h-1zM754 288h1v1h-1zM743 264h1v1h-1zM742 265h1v1h-1zM751 280h1v1h-1zM757 296h1v1h-1zM747 264h1v1h-1zM747 267h1v1h-1zM753 283h1v1h-1zM748 272h1v1h-1zM753 286h1v1h-1zM748 278h1v1h-1zM748 284h1v1h-1zM750 278h1v1h-1zM749 276h1v1h-1zM756 294h1v1h-1zM745 263h1v1h-1zM749 279h1v1h-1zM746 265h1v1h-1zM758 297h1v1h-1zM754 278h1v1h-1z" fill="#0f0" shape-rendering="crispEdges"/><path d="M748 318h1v1h-1zM744 316h1v1h-1zM742 312h1v1h-1zM742 318h1v1h-1zM743 317h1v1h-1zM745 315h1v1h-1zM743 313h1v1h-1zM746 314h1v1h-1zM747 317h1v1h-1zM744 314h1v1h-1zM747 313h1v1h-1zM746 316h1v1h-1zM748 312h1v1h-1z" fill="#00f" shape-rendering="crispEdges"/><circle cx="25" cy="252" r="7.5" fill="#f00" stroke="#000" stroke-width="1"/><text x="25" y="256.6" text-anchor="middle" font-size="13" font-weight="bold" fill="#fff">A</text><circle cx="31" cy="298" r="7.5" fill="#f00" stroke="#000" stroke-width="1"/><text x="31" y="302.6" text-anchor="middle" font-size="13" font-weight="bold" fill="#fff">B</text><circle cx="85" cy="182" r="7.5" fill="#f00" stroke="#000" stroke-width="1"/><text x="85" y="186.6" text-anchor="middle" font-size="13" font-weight="bold" fill="#fff">C</text><circle cx="109" cy="246" r="7.5" fill="#f00" stroke="#000" stroke-width="1"/><text x="109" y="250.6" text-anchor="middle" font-size="13" font-weight="bold" fill="#fff">A</text><circle cx="145" cy="184" r="7.5" fill="#f00" stroke="#000" stroke-width="1"/><text x="145" y="188.6" text-anchor="middle" font-size="13" font-weight="bold" fill="#fff">B</text><circle cx="258.5" cy="282" r="7.5" fill="#f00" stroke="#000" stroke-width="1"/><text x="258.5" y="286.6" text-anchor="middle" font-size="13" font-weight="bold" fill="#fff">C</text><circle cx="318.5" cy="149" r="7.5" fill="#f00" stroke="#000" stroke-width="1"/><text x="318.5" y="153.6" text-anchor="middle" font-size="13" font-weight="bold" fill="#fff">A</text><circle cx="349" cy="249" r="7.5" fill="#f00" stroke="#000" stroke-width="1"/><text x="349" y="253.6" text-anchor="middle" font-size="13" font-weight="bold" fill="#fff">B</text><circle cx="390.5" cy="159" r="7.5" fill="#f00" stroke="#000" stroke-width="1"/><text x="390.5" y="163.6" text-anchor="middle" font-size="13" font-weight="bold" fill="#fff">C</text><circle cx="438.5" cy="242" r="7.5" fill="#f00" stroke="#000" stroke-width="1"/><text x="438.5" y="246.6" text-anchor="middle" font-size="13" font-weight="bold" fill="#fff">A</text><circle cx="463" cy="185" r="7.5" fill="#f00" stroke="#000" stroke-width="1"/><text x="463" y="189.6" text-anchor="middle" font-size="13" font-weight="bold" fill="#fff">B</text><circle cx="619" cy="305" r="7.5" fill="#f00" stroke="#000" stroke-width="1"/><text x="619" y="309.6" text-anchor="middle" font-size="13" font-weight="bold" fill="#fff">A</text><circle cx="625" cy="349.5" r="7.5" fill="#f00" stroke="#000" stroke-width="1"/><text x="625" y="354.1" text-anchor="middle" font-size="13" font-weight="bold" fill="#fff">B</text><circle cx="613" cy="373.5" r="7.5" fill="#f00" stroke="#000" stroke-width="1"/><text x="613" y="378.1" text-anchor="middle" font-size="13" font-weight="bold" fill="#fff">C</text><circle cx="684.5" cy="48" r="7.5" fill="#f00" stroke="#000" stroke-width="1"/><text x="684.5" y="52.6" text-anchor="middle" font-size="13" font-weight="bold" fill="#fff">C</text><circle cx="703" cy="123" r="7.5" fill="#00f" stroke="#000" stroke-width="1"/><text x="703" y="127.6" text-anchor="middle" font-size="13" font-weight="bold" fill="#fff">2</text><circle cx="697" cy="175" r="7.5" fill="#00f" stroke="#000" stroke-width="1"/><text x="697" y="179.6" text-anchor="middle" font-size="13" font-weight="bold" fill="#fff">1</text><circle cx="745" cy="414.5" r="7.5" fill="#00f" stroke="#000" stroke-width="1"/><text x="745" y="419.1" text-anchor="middle" font-size="13" font-weight="bold" fill="#fff">3</text><circle cx="919" cy="231.5" r="7.5" fill="#00f" stroke="#000" stroke-width="1"/><text x="919" y="236.1" text-anchor="middle" font-size="13" font-weight="bold" fill="#fff">4</text><circle cx="1" cy="348" r="7.5" fill="#00f" stroke="#000" stroke-width="1"/><text x="1" y="352.6" text-anchor="middle" font-size="13" font-weight="bold" fill="#fff">5</text><text x="264" y="224.8" text-anchor="middle" font-size="14" font-weight="bold" fill="#00f" textLength="7.0" lengthAdjust="spacingAndGlyphs">1</text><text x="288.5" y="260.8" text-anchor="middle" font-size="14" font-weight="bold" fill="#00f" textLength="7.0" lengthAdjust="spacingAndGlyphs">2</text><text x="313" y="199.8" text-anchor="middle" font-size="14" font-weight="bold" fill="#00f" textLength="7.0" lengthAdjust="spacingAndGlyphs">3</text><text x="318.5" y="182.8" text-anchor="middle" font-size="14" font-weight="bold" fill="#00f" textLength="7.0" lengthAdjust="spacingAndGlyphs">5</text><text x="318.5" y="233.8" text-anchor="middle" font-size="14" font-weight="bold" fill="#00f" textLength="7.0" lengthAdjust="spacingAndGlyphs">4</text><text x="480.5" y="213.8" text-anchor="middle" font-size="14" font-weight="bold" fill="#00f" textLength="7.0" lengthAdjust="spacingAndGlyphs">2</text><text x="474.5" y="246.3" text-anchor="middle" font-size="14" font-weight="bold" fill="#00f" textLength="7.0" lengthAdjust="spacingAndGlyphs">1</text><text x="576.5" y="289.3" text-anchor="middle" font-size="14" font-weight="bold" fill="#00f" textLength="7.0" lengthAdjust="spacingAndGlyphs">4</text><text x="570.5" y="318.8" text-anchor="middle" font-size="14" font-weight="bold" fill="#00f" textLength="7.0" lengthAdjust="spacingAndGlyphs">3</text><text x="612.5" y="362.5" text-anchor="middle" font-size="14" font-weight="bold" fill="#00f" textLength="7.0" lengthAdjust="spacingAndGlyphs">5</text><text x="636.5" y="296.3" text-anchor="middle" font-size="14" font-weight="bold" fill="#00f" textLength="7.0" lengthAdjust="spacingAndGlyphs">1</text><text x="643" y="323.8" text-anchor="middle" font-size="14" font-weight="bold" fill="#00f" textLength="7.0" lengthAdjust="spacingAndGlyphs">2</text><text x="660.7" y="177.8" text-anchor="middle" font-size="14" font-weight="bold" fill="#00f" textLength="7.0" lengthAdjust="spacingAndGlyphs">3</text><text x="666.4" y="240.1" text-anchor="middle" font-size="14" font-weight="bold" fill="#00f" textLength="7.0" lengthAdjust="spacingAndGlyphs">4</text><text x="685" y="69.4" text-anchor="middle" font-size="14" font-weight="bold" fill="#00f" textLength="7.0" lengthAdjust="spacingAndGlyphs">5</text><text x="1021.5" y="429" font-size="14" font-weight="normal" letter-spacing="-0.7" fill="#00f">-5-</text><text x="1021.5" y="532" font-size="14" font-weight="normal" letter-spacing="-0.7" fill="#00f">-5-</text><text x="768.3" y="203.0" text-anchor="middle" font-size="13" font-weight="bold" fill="#f00">A</text><text x="804.7" y="367.8" text-anchor="middle" font-size="12" font-weight="bold" fill="#f00">a</text><text x="847.4" y="263.8" text-anchor="middle" font-size="13" font-weight="bold" fill="#f00">b</text><text x="888.6" y="381.8" text-anchor="middle" font-size="12" font-weight="normal" fill="#f00">c</text><text x="888.6" y="394.8" text-anchor="middle" font-size="14" font-weight="normal" fill="#f00">B</text><text x="918" y="253.3" text-anchor="middle" font-size="13" font-weight="normal" fill="#f00">C</text><text x="-3" y="324" font-size="10" font-weight="bold" fill="#00f">7</text><rect x="0" y="327" width="3" height="1" fill="#00f"/><text x="-3" y="336.5" font-size="10" font-weight="bold" fill="#00f">3</text><rect x="1033" y="404" width="16" height="16" fill="#f00"/><text x="1041" y="416" text-anchor="middle" font-size="12.5" font-weight="bold" fill="#fff" textLength="13" lengthAdjust="spacingAndGlyphs">47</text><text x="1051.5" y="417" font-size="14" font-weight="normal" fill="#f00">PTI</text><path d="M0.0 418.5 L3.3 411.3 L6.6 398.2 L15.7 379.8 L21.6 360.1 L26.2 341.8 L29.5 330.0 L30.8 322.4 L35.4 309.3 L37.4 305.4 L43.0 298.0 L49.8 289.7 L55.0 285.8 L60.6 291.3 L67.0 280.3 L70.7 267.4 L74.3 253.7 L78.9 239.9 L84.4 231.1 L91.8 230.7 L97.3 227.0 L100.0 216.0 L103.7 199.5 L109.2 180.6 L114.7 182.5 L117.5 190.4 L122.0 205.0 L127.6 225.2 L138.6 239.9 L146.8 256.4 L156.0 275.7 L162.4 280.3 L165.2 274.8 L172.5 256.4 L177.1 250.0 L185.4 255.5 L193.6 239.9 L199.2 239.9 L201.9 249.1 L209.3 274.8 L216.3 300.7 L223.2 327.6 L232.9 327.8 L241.1 329.6 L246.6 326.8 L253.5 314.4 L259.0 312.2 L263.1 317.2 L270.0 327.6 L282.4 328.7 L293.4 330.9 L301.7 326.8 L309.9 315.8 L313.8 305.0 L318.4 282.5 L324.8 252.2 L331.3 236.6 L336.8 223.7 L342.3 213.1 L345.0 211.8 L349.6 218.2 L355.1 217.3 L361.0 209.6 L367.1 214.2 L372.6 213.1 L376.2 206.3 L379.9 195.3 L383.6 192.5 L386.3 195.3 L390.9 201.7 L397.3 201.7 L401.0 196.2 L405.6 181.5 L409.4 170.1 L414.9 155.7 L421.3 143.8 L425.0 132.8 L428.1 121.8 L430.5 103.4 L434.1 81.4 L436.9 59.4 L439.1 47.4 L441.5 63.0 L445.2 92.4 L456.2 110.8 L463.5 129.1 L469.9 129.1 L481.9 113.9 L488.3 113.9 L493.8 124.5 L497.5 147.5 L501.1 170.1 L505.4 200.3 L511.1 208.6 L522.8 185.2 L527.8 191.9 L536.1 216.0 L547.4 233.4 L553.8 251.7 L558.4 270.1 L561.2 286.6 L564.8 301.6 L574.9 302.7 L584.1 306.8 L589.6 293.9 L595.1 286.6 L600.6 286.6 L606.1 289.7 L611.7 289.7 L619.0 293.9 L626.3 304.9 L631.8 317.8 L637.3 329.7 L643.8 336.1 L648.4 334.3 L660.3 320.0 L666.7 321.1 L673.1 318.7 L679.6 309.5 L691.0 320.5 L697.9 304.9 L702.5 287.5 L708.0 285.3 L711.7 290.3 L721.8 310.4 L726.4 329.7 L733.3 346.0 L738.9 346.0 L750.7 361.8 L757.1 358.7 L763.4 346.8 L774.5 353.9 L781.7 348.4 L786.4 350.7 L793.6 364.7 L804.7 364.7 L811.0 372.0 L817.0 369.7 L823.1 372.9 L829.3 372.9 L834.8 355.5 L841.6 341.8 L854.7 340.5 L859.1 335.5 L864.9 317.4 L870.5 309.1 L879.3 303.0 L888.1 285.4 L895.1 266.1 L900.4 264.3 L907.4 265.7 L914.1 259.1 L918.0 263.4 L925.0 288.9 L932.0 314.4 L942.6 336.4 L949.6 357.4 L958.4 379.0 L965.0 395.0 L972.0 402.0 L979.1 402.7 L983.8 418.4 L988.5 439.5 L996.7 474.6 L1003.2 488.0 L1015.4 469.5 L1021.3 471.8 L1033.0 494.6 L1038.8 492.2 L1044.7 483.5 L1057.6 436.7 L1063.4 446.5 L1067.0 465.3 L1074.7 502.8 L1086.9 526.2 L1092.7 530.2 L1100.0 516.8 L1105.3 504.5 L1110.3 506.8 L1118.6 516.8 L1134.3 530.2 L1142.0 521.9 L1147.6 521.2 L1153.0 510.2 L1158.7 493.5 L1165.3 484.1 L1171.3 482.5 L1177.0 488.5 L1193.7 484.5 L1200.4 475.1 L1207.1 471.8 L1218.7 459.1 L1225.4 455.1 L1235.4 423.4 L1242.1 396.0 L1248.8 393.4 L1255.5 394.4 L1262.1 382.5 L1267.1 365.2 L1273.1 362.5 L1278.8 380.9 L1290.5 372.6 L1300.5 381.9 L1308.8 393.6 L1320.5 429.6" fill="none" stroke="#008000" stroke-width="2" stroke-linejoin="round" shape-rendering="crispEdges"/><path d="M0 697.4 L1 694.0 L2 690.6 L3 687.3 L4 683.9 L5 680.6 L6 677.3 L7 674.2 L8 671.1 L9 668.1 L10 665.2 L11 662.5 L12 659.9 L13 657.5 L14 655.3 L15 653.2 L16 651.3 L17 649.6 L18 648.1 L19 646.7 L20 645.6 L21 644.7 L22 644.0 L23 643.4 L24 643.1 L25 642.9 L26 642.9 L27 643.1 L28 643.5 L29 644.0 L30 644.6 L31 645.4 L32 646.2 L33 647.2 L34 648.2 L35 649.3 L36 650.5 L37 651.7 L38 652.9 L39 654.1 L40 655.3 L41 656.4 L42 657.5 L43 658.5 L44 659.5 L45 660.3 L46 661.1 L47 661.7 L48 662.2 L49 662.5 L50 662.6 L51 662.6 L52 662.4 L53 662.1 L54 661.5 L55 660.7 L56 659.8 L57 658.6 L58 657.2 L59 655.7 L60 653.9 L61 651.9 L62 649.8 L63 647.5 L64 645.0 L65 642.4 L66 639.6 L67 636.7 L68 633.6 L69 630.5 L70 627.2 L71 623.9 L72 620.5 L73 617.1 L74 613.6 L75 610.1 L76 606.7 L77 603.2 L78 599.8 L79 596.5 L80 593.3 L81 590.1 L82 587.1 L83 584.2 L84 581.4 L85 578.8 L86 576.4 L87 574.1 L88 572.1 L89 570.2 L90 568.6 L91 567.2 L92 566.0 L93 565.0 L94 564.3 L95 563.8 L96 563.5 L97 563.5 L98 563.6 L99 564.1 L100 564.7 L101 565.5 L102 566.6 L103 567.8 L104 569.3 L105 570.9 L106 572.6 L107 574.5 L108 576.5 L109 578.7 L110 580.9 L111 583.2 L112 585.6 L113 588.0 L114 590.5 L115 592.9 L116 595.4 L117 597.8 L118 600.2 L119 602.5 L120 604.8 L121 606.9 L122 609.0 L123 611.0 L124 612.8 L125 614.5 L126 616.0 L127 617.4 L128 618.6 L129 619.6 L130 620.5 L131 621.1 L132 621.6 L133 621.9 L134 622.0 L135 622.0 L136 621.8 L137 621.4 L138 620.8 L139 620.1 L140 619.2 L141 618.2 L142 617.0 L143 615.8 L144 614.4 L145 613.0 L146 611.4 L147 609.9 L148 608.3 L149 606.6 L150 605.0 L151 603.4 L152 601.8 L153 600.2 L154 598.7 L155 597.3 L156 596.0 L157 594.7 L158 593.7 L159 592.7 L160 591.9 L161 591.3 L162 590.8 L163 590.6 L164 590.5 L165 590.6 L166 591.0 L167 591.5 L168 592.3 L169 593.3 L170 594.5 L171 595.9 L172 597.6 L173 599.5 L174 601.5 L175 603.8 L176 606.3 L177 608.9 L178 611.8 L179 614.8 L180 617.9 L181 621.2 L182 624.6 L183 628.1 L184 631.7 L185 635.4 L186 639.1 L187 642.9 L188 646.7 L189 650.5 L190 654.3 L191 658.0 L192 661.7 L193 665.3 L194 668.9 L195 672.3 L196 675.6 L197 678.8 L198 681.8 L199 684.7 L200 687.4 L201 689.9 L202 692.3 L203 694.4 L204 696.4 L205 698.1 L206 699.6 L207 700.9 L208 701.9 L209 702.8 L210 703.4 L211 703.8 L212 704.1 L213 704.1 L214 703.9 L215 703.5 L216 703.0 L217 702.3 L218 701.4 L219 700.4 L220 699.3 L221 698.1 L222 696.7 L223 695.3 L224 693.9 L225 692.4 L226 690.8 L227 689.3 L228 687.7 L229 686.2 L230 684.7 L231 683.3 L232 681.9 L233 680.7 L234 679.5 L235 678.5 L236 677.5 L237 676.7 L238 676.1 L239 675.6 L240 675.3 L241 675.2 L242 675.2 L243 675.4 L244 675.8 L245 676.4 L246 677.2 L247 678.1 L248 679.2 L249 680.5 L250 682.0 L251 683.7 L252 685.4 L253 687.4 L254 689.4 L255 691.6 L256 693.9 L257 696.2 L258 698.7 L259 701.2 L260 703.7 L261 706.3 L262 708.9 L263 711.5 L264 714.0 L265 716.5 L266 719.0 L267 721.3 L268 723.6 L269 725.8 L270 727.8 L271 729.7 L272 731.5 L273 733.0 L274 734.4 L275 735.6 L276 736.6 L277 737.4 L278 738.0 L279 738.3 L280 738.4 L281 738.3 L282 737.9 L283 737.3 L284 736.5 L285 735.4 L286 734.2 L287 732.7 L288 730.9 L289 729.0 L290 726.9 L291 724.6 L292 722.1 L293 719.5 L294 716.7 L295 713.7 L296 710.7 L297 707.6 L298 704.3 L299 701.1 L300 697.7 L301 694.3 L302 691.0 L303 687.6 L304 684.2 L305 680.9 L306 677.7 L307 674.5 L308 671.4 L309 668.4 L310 665.5 L311 662.8 L312 660.2 L313 657.8 L314 655.5 L315 653.4 L316 651.5 L317 649.7 L318 648.2 L319 646.9 L320 645.7 L321 644.8 L322 644.0 L323 643.5 L324 643.1 L325 642.9 L326 642.9 L327 643.1 L328 643.4 L329 643.9 L330 644.5 L331 645.3 L332 646.1 L333 647.1 L334 648.1 L335 649.2 L336 650.4 L337 651.6 L338 652.8 L339 654.0 L340 655.2 L341 656.3 L342 657.4 L343 658.5 L344 659.4 L345 660.3 L346 661.0 L347 661.6 L348 662.1 L349 662.5 L350 662.6 L351 662.6 L352 662.5 L353 662.1 L354 661.6 L355 660.8 L356 659.9 L357 658.7 L358 657.4 L359 655.8 L360 654.1 L361 652.2 L362 650.0 L363 647.7 L364 645.3 L365 642.6 L366 639.9 L367 637.0 L368 633.9 L369 630.8 L370 627.5 L371 624.2 L372 620.8 L373 617.4 L374 613.9 L375 610.5 L376 607.0 L377 603.6 L378 600.2 L379 596.9 L380 593.6 L381 590.4 L382 587.4 L383 584.5 L384 581.7 L385 579.1 L386 576.6 L387 574.3 L388 572.3 L389 570.4 L390 568.7 L391 567.3 L392 566.1 L393 565.1 L394 564.3 L395 563.8 L396 563.5 L397 563.4 L398 563.6 L399 564.0 L400 564.6 L401 565.5 L402 566.5 L403 567.7 L404 569.1 L405 570.7 L406 572.4 L407 574.3 L408 576.3 L409 578.5 L410 580.7 L411 583.0 L412 585.4 L413 587.8 L414 590.2 L415 592.7 L416 595.1 L417 597.6 L418 600.0 L419 602.3 L420 604.6 L421 606.7 L422 608.8 L423 610.8 L424 612.6 L425 614.3 L426 615.8 L427 617.2 L428 618.5 L429 619.5 L430 620.4 L431 621.1 L432 621.6 L433 621.9 L434 622.0 L435 622.0 L436 621.8 L437 621.4 L438 620.8 L439 620.1 L440 619.3 L441 618.3 L442 617.1 L443 615.9 L444 614.5 L445 613.1 L446 611.6 L447 610.0 L448 608.4 L449 606.8 L450 605.2 L451 603.5 L452 601.9 L453 600.3 L454 598.8 L455 597.4 L456 596.1 L457 594.9 L458 593.8 L459 592.8 L460 592.0 L461 591.3 L462 590.9 L463 590.6 L464 590.5 L465 590.6 L466 590.9 L467 591.4 L468 592.2 L469 593.2 L470 594.4 L471 595.8 L472 597.4 L473 599.3 L474 601.3 L475 603.6 L476 606.0 L477 608.7 L478 611.5 L479 614.5 L480 617.6 L481 620.9 L482 624.3 L483 627.8 L484 631.4 L485 635.0 L486 638.7 L487 642.5 L488 646.3 L489 650.1 L490 653.9 L491 657.6 L492 661.3 L493 665.0 L494 668.5 L495 671.9 L496 675.3 L497 678.5 L498 681.5 L499 684.4 L500 687.2 L501 689.7 L502 692.1 L503 694.2 L504 696.2 L505 697.9 L506 699.4 L507 700.7 L508 701.8 L509 702.7 L510 703.4 L511 703.8 L512 704.1 L513 704.1 L514 703.9 L515 703.6 L516 703.0 L517 702.4 L518 701.5 L519 700.5 L520 699.4 L521 698.2 L522 696.9 L523 695.5 L524 694.0 L525 692.5 L526 691.0 L527 689.4 L528 687.9 L529 686.4 L530 684.9 L531 683.4 L532 682.1 L533 680.8 L534 679.6 L535 678.6 L536 677.6 L537 676.8 L538 676.2 L539 675.7 L540 675.3 L541 675.2 L542 675.2 L543 675.4 L544 675.8 L545 676.3 L546 677.1 L547 678.0 L548 679.1 L549 680.4 L550 681.9 L551 683.5 L552 685.3 L553 687.2 L554 689.2 L555 691.4 L556 693.6 L557 696.0 L558 698.4 L559 700.9 L560 703.5 L561 706.1 L562 708.6 L563 711.2 L564 713.8 L565 716.3 L566 718.7 L567 721.1 L568 723.4 L569 725.6 L570 727.6 L571 729.5 L572 731.3 L573 732.9 L574 734.3 L575 735.5 L576 736.5 L577 737.3 L578 737.9 L579 738.3 L580 738.4 L581 738.3 L582 738.0 L583 737.4 L584 736.6 L585 735.6 L586 734.3 L587 732.8 L588 731.1 L589 729.2 L590 727.1 L591 724.8 L592 722.4 L593 719.7 L594 717.0 L595 714.0 L596 711.0 L597 707.9 L598 704.7 L599 701.4 L600 698.1 L601 694.7 L602 691.3 L603 687.9 L604 684.6 L605 681.3 L606 678.0 L607 674.8 L608 671.7 L609 668.7 L610 665.8 L611 663.1 L612 660.5 L613 658.0 L614 655.7 L615 653.6 L616 651.7 L617 649.9 L618 648.4 L619 647.0 L620 645.8 L621 644.9 L622 644.1 L623 643.5 L624 643.1 L625 642.9 L626 642.9 L627 643.1 L628 643.4 L629 643.9 L630 644.5 L631 645.2 L632 646.0 L633 647.0 L634 648.0 L635 649.1 L636 650.2 L637 651.4 L638 652.6 L639 653.8 L640 655.0 L641 656.2 L642 657.3 L643 658.3 L644 659.3 L645 660.2 L646 660.9 L647 661.6 L648 662.1 L649 662.4 L650 662.6 L651 662.6 L652 662.5 L653 662.1 L654 661.6 L655 660.9 L656 660.0 L657 658.8 L658 657.5 L659 656.0 L660 654.3 L661 652.4 L662 650.3 L663 648.0 L664 645.5 L665 642.9 L666 640.2 L667 637.3 L668 634.2 L669 631.1 L670 627.9 L671 624.5 L672 621.2 L673 617.7 L674 614.3 L675 610.8 L676 607.4 L677 603.9 L678 600.5 L679 597.2 L680 593.9 L681 590.7 L682 587.7 L683 584.8 L684 582.0 L685 579.3 L686 576.9 L687 574.6 L688 572.5 L689 570.6 L690 568.9 L691 567.4 L692 566.2 L693 565.2 L694 564.4 L695 563.8 L696 563.5 L697 563.4 L698 563.6 L699 564.0 L700 564.6 L701 565.4 L702 566.4 L703 567.6 L704 569.0 L705 570.5 L706 572.3 L707 574.1 L708 576.1 L709 578.2 L710 580.5 L711 582.8 L712 585.1 L713 587.5 L714 590.0 L715 592.4 L716 594.9 L717 597.3 L718 599.7 L719 602.1 L720 604.3 L721 606.5 L722 608.6 L723 610.6 L724 612.4 L725 614.1 L726 615.7 L727 617.1 L728 618.3 L729 619.4 L730 620.3 L731 621.0 L732 621.5 L733 621.9 L734 622.0 L735 622.0 L736 621.8 L737 621.4 L738 620.9 L739 620.2 L740 619.4 L741 618.4 L742 617.3 L743 616.0 L744 614.7 L745 613.3 L746 611.8 L747 610.2 L748 608.6 L749 607.0 L750 605.3 L751 603.7 L752 602.1 L753 600.5 L754 599.0 L755 597.6 L756 596.2 L757 595.0 L758 593.9 L759 592.9 L760 592.1 L761 591.4 L762 590.9 L763 590.6 L764 590.5 L765 590.6 L766 590.9 L767 591.4 L768 592.1 L769 593.1 L770 594.2 L771 595.6 L772 597.2 L773 599.1 L774 601.1 L775 603.3 L776 605.8 L777 608.4 L778 611.2 L779 614.2 L780 617.3 L781 620.5 L782 623.9 L783 627.4 L784 631.0 L785 634.7 L786 638.4 L787 642.1 L788 645.9 L789 649.7 L790 653.5 L791 657.3 L792 661.0 L793 664.6 L794 668.2 L795 671.6 L796 675.0 L797 678.2 L798 681.2 L799 684.1 L800 686.9 L801 689.5 L802 691.8 L803 694.0 L804 696.0 L805 697.7 L806 699.3 L807 700.6 L808 701.7 L809 702.6 L810 703.3 L811 703.8 L812 704.0 L813 704.1 L814 703.9 L815 703.6 L816 703.1 L817 702.4 L818 701.6 L819 700.6 L820 699.5 L821 698.3 L822 697.0 L823 695.6 L824 694.2 L825 692.7 L826 691.1 L827 689.6 L828 688.0 L829 686.5 L830 685.0 L831 683.6 L832 682.2 L833 680.9 L834 679.7 L835 678.7 L836 677.7 L837 676.9 L838 676.2 L839 675.7 L840 675.4 L841 675.2 L842 675.2 L843 675.4 L844 675.7 L845 676.3 L846 677.0 L847 677.9 L848 679.0 L849 680.3 L850 681.7 L851 683.3 L852 685.1 L853 687.0 L854 689.0 L855 691.2 L856 693.4 L857 695.8 L858 698.2 L859 700.7 L860 703.2 L861 705.8 L862 708.4 L863 711.0 L864 713.5 L865 716.0 L866 718.5 L867 720.9 L868 723.2 L869 725.4 L870 727.4 L871 729.3 L872 731.1 L873 732.7 L874 734.2 L875 735.4 L876 736.4 L877 737.3 L878 737.9 L879 738.2 L880 738.4 L881 738.3 L882 738.0 L883 737.5 L884 736.7 L885 735.7 L886 734.4 L887 733.0 L888 731.3 L889 729.4 L890 727.3 L891 725.1 L892 722.6 L893 720.0 L894 717.2 L895 714.3 L896 711.3 L897 708.2 L898 705.0 L899 701.7 L900 698.4 L901 695.0 L902 691.6 L903 688.3 L904 684.9 L905 681.6 L906 678.3 L907 675.1 L908 672.0 L909 669.0 L910 666.1 L911 663.3 L912 660.7 L913 658.2 L914 655.9 L915 653.8 L916 651.8 L917 650.1 L918 648.5 L919 647.1 L920 645.9 L921 645.0 L922 644.2 L923 643.6 L924 643.2 L925 643.0 L926 642.9 L927 643.1 L928 643.4 L929 643.8 L930 644.4 L931 645.1 L932 645.9 L933 646.9 L934 647.9 L935 649.0 L936 650.1 L937 651.3 L938 652.5 L939 653.7 L940 654.9 L941 656.1 L942 657.2 L943 658.2 L944 659.2 L945 660.1 L946 660.9 L947 661.5 L948 662.0 L949 662.4 L950 662.6 L951 662.7 L952 662.5 L953 662.2 L954 661.7 L955 661.0 L956 660.1 L957 659.0 L958 657.7 L959 656.1 L960 654.4 L961 652.6 L962 650.5 L963 648.2 L964 645.8 L965 643.2 L966 640.4 L967 637.6 L968 634.5 L969 631.4 L970 628.2 L971 624.9 L972 621.5 L973 618.1 L974 614.6 L975 611.2 L976 607.7 L977 604.3 L978 600.9 L979 597.5 L980 594.2 L981 591.1 L982 588.0 L983 585.0 L984 582.2 L985 579.6 L986 577.1 L987 574.8 L988 572.7 L989 570.8 L990 569.0 L991 567.6 L992 566.3 L993 565.3 L994 564.5 L995 563.9 L996 563.5 L997 563.4 L998 563.6 L999 563.9 L1000 564.5 L1001 565.3 L1002 566.3 L1003 567.5 L1004 568.8 L1005 570.4 L1006 572.1 L1007 573.9 L1008 575.9 L1009 578.0 L1010 580.2 L1011 582.5 L1012 584.9 L1013 587.3 L1014 589.7 L1015 592.2 L1016 594.6 L1017 597.1 L1018 599.5 L1019 601.8 L1020 604.1 L1021 606.3 L1022 608.4" fill="none" stroke="#00f" stroke-width="2" shape-rendering="crispEdges"/><path d="M1022 608.4 L1023 610.4 L1024 612.2 L1025 614.0 L1026 615.5 L1027 617.0 L1028 618.2 L1029 619.3 L1030 620.2 L1031 620.9 L1032 621.5 L1033 621.9 L1034 622.0 L1035 622.0 L1036 621.8 L1037 621.5 L1038 621.0 L1039 620.3 L1040 619.5 L1041 618.5 L1042 617.4 L1043 616.2 L1044 614.8 L1045 613.4 L1046 611.9 L1047 610.4 L1048 608.7 L1049 607.1 L1050 605.5 L1051 603.8 L1052 602.2 L1053 600.7 L1054 599.1 L1055 597.7 L1056 596.3 L1057 595.1 L1058 594.0 L1059 593.0 L1060 592.1 L1061 591.5 L1062 590.9 L1063 590.6 L1064 590.5 L1065 590.6 L1066 590.8 L1067 591.3 L1068 592.0 L1069 593.0 L1070 594.1 L1071 595.5 L1072 597.1 L1073 598.9 L1074 600.9 L1075 603.1 L1076 605.5 L1077 608.1 L1078 610.9 L1079 613.9 L1080 617.0 L1081 620.2 L1082 623.6 L1083 627.1 L1084 630.6 L1085 634.3 L1086 638.0 L1087 641.8 L1088 645.5 L1089 649.3 L1090 653.1 L1091 656.9 L1092 660.6 L1093 664.2 L1094 667.8 L1095 671.3 L1096 674.6 L1097 677.8 L1098 680.9 L1099 683.9 L1100 686.6 L1101 689.2 L1102 691.6 L1103 693.8 L1104 695.8 L1105 697.6 L1106 699.2 L1107 700.5 L1108 701.6 L1109 702.6 L1110 703.3 L1111 703.7 L1112 704.0 L1113 704.1 L1114 704.0 L1115 703.7 L1116 703.2 L1117 702.5 L1118 701.7 L1119 700.7 L1120 699.6 L1121 698.4 L1122 697.1 L1123 695.8 L1124 694.3 L1125 692.8 L1126 691.3 L1127 689.7 L1128 688.2 L1129 686.7 L1130 685.2 L1131 683.7 L1132 682.3 L1133 681.0 L1134 679.8 L1135 678.8 L1136 677.8 L1137 677.0 L1138 676.3 L1139 675.7 L1140 675.4 L1141 675.2 L1142 675.2 L1143 675.3 L1144 675.7 L1145 676.2 L1146 676.9 L1147 677.8 L1148 678.9 L1149 680.1 L1150 681.6 L1151 683.1 L1152 684.9 L1153 686.8 L1154 688.8 L1155 690.9 L1156 693.2 L1157 695.5 L1158 697.9 L1159 700.4 L1160 703.0 L1161 705.5 L1162 708.1 L1163 710.7 L1164 713.3 L1165 715.8 L1166 718.3 L1167 720.6 L1168 723.0 L1169 725.1 L1170 727.2 L1171 729.2 L1172 731.0 L1173 732.6 L1174 734.0 L1175 735.3 L1176 736.3 L1177 737.2 L1178 737.8 L1179 738.2 L1180 738.4 L1181 738.3 L1182 738.1 L1183 737.5 L1184 736.8 L1185 735.8 L1186 734.6 L1187 733.1 L1188 731.5 L1189 729.6 L1190 727.6 L1191 725.3 L1192 722.9 L1193 720.3 L1194 717.5 L1195 714.6 L1196 711.6 L1197 708.5 L1198 705.3 L1199 702.0 L1200 698.7 L1201 695.4 L1202 692.0 L1203 688.6 L1204 685.2 L1205 681.9 L1206 678.6 L1207 675.4 L1208 672.3 L1209 669.3 L1210 666.4 L1211 663.6 L1212 661.0 L1213 658.5 L1214 656.2 L1215 654.0 L1216 652.0 L1217 650.2 L1218 648.7 L1219 647.3 L1220 646.1 L1221 645.0 L1222 644.2 L1223 643.6 L1224 643.2 L1225 643.0 L1226 642.9 L1227 643.0 L1228 643.3 L1229 643.8 L1230 644.3 L1231 645.0 L1232 645.9 L1233 646.8 L1234 647.8 L1235 648.9 L1236 650.0 L1237 651.2 L1238 652.4 L1239 653.6 L1240 654.8 L1241 656.0 L1242 657.1 L1243 658.1 L1244 659.1 L1245 660.0 L1246 660.8 L1247 661.5 L1248 662.0 L1249 662.4 L1250 662.6 L1251 662.7 L1252 662.5 L1253 662.2 L1254 661.7 L1255 661.1 L1256 660.2 L1257 659.1 L1258 657.8 L1259 656.3 L1260 654.6 L1261 652.8 L1262 650.7 L1263 648.4 L1264 646.0 L1265 643.5 L1266 640.7 L1267 637.8 L1268 634.8 L1269 631.7 L1270 628.5 L1271 625.2 L1272 621.9 L1273 618.4 L1274 615.0 L1275 611.5 L1276 608.1 L1277 604.6 L1278 601.2 L1279 597.8 L1280 594.6 L1281 591.4 L1282 588.3 L1283 585.3 L1284 582.5 L1285 579.8 L1286 577.3 L1287 575.0 L1288 572.9 L1289 570.9 L1290 569.2 L1291 567.7 L1292 566.4 L1293 565.3 L1294 564.5 L1295 563.9 L1296 563.6 L1297 563.4 L1298 563.5 L1299 563.9 L1300 564.4 L1301 565.2 L1302 566.2 L1303 567.3 L1304 568.7 L1305 570.2 L1306 571.9 L1307 573.7 L1308 575.7 L1309 577.8 L1310 580.0 L1311 582.3 L1312 584.6 L1313 587.1 L1314 589.5 L1315 591.9 L1316 594.4 L1317 596.8 L1318 599.2 L1319 601.6 L1320 603.9 L1321 606.1 L1322 608.2" fill="none" stroke="#f00" stroke-width="2" shape-rendering="crispEdges"/><g shape-rendering="crispEdges"><rect x="1323" y="23" width="43" height="533" fill="#f0f0f0"/><rect x="1323" y="562" width="43" height="177" fill="#f0f0f0"/><rect x="1323" y="23" width="1" height="533" fill="#000"/><rect x="1323" y="555" width="43" height="1" fill="#000"/><rect x="1323" y="562" width="1" height="177" fill="#000"/><rect x="1323" y="738" width="43" height="1" fill="#000"/><path d="M1325 26h1v1h-1zM1325 30h6v1h-6zM1325 34h1v1h-1zM1325 38h1v1h-1zM1325 42h1v1h-1zM1325 46h1v1h-1zM1325 50h3v1h-3zM1325 54h1v1h-1zM1325 57h1v1h-1zM1325 61h1v1h-1zM1325 65h1v1h-1zM1325 69h6v1h-6zM1325 73h1v1h-1zM1325 77h1v1h-1zM1325 81h1v1h-1zM1325 85h1v1h-1zM1325 88h3v1h-3zM1325 92h1v1h-1zM1325 96h1v1h-1zM1325 100h1v1h-1zM1325 104h1v1h-1zM1325 108h6v1h-6zM1325 112h1v1h-1zM1325 116h1v1h-1zM1325 119h1v1h-1zM1325 123h1v1h-1zM1325 127h3v1h-3zM1325 131h1v1h-1zM1325 135h1v1h-1zM1325 139h1v1h-1zM1325 143h1v1h-1zM1325 147h6v1h-6zM1325 150h1v1h-1zM1325 154h1v1h-1zM1325 158h1v1h-1zM1325 162h1v1h-1zM1325 166h3v1h-3zM1325 170h1v1h-1zM1325 174h1v1h-1zM1325 178h1v1h-1zM1325 181h1v1h-1zM1325 185h6v1h-6zM1325 189h1v1h-1zM1325 193h1v1h-1zM1325 197h1v1h-1zM1325 201h1v1h-1zM1325 205h3v1h-3zM1325 209h1v1h-1zM1325 212h1v1h-1zM1325 216h1v1h-1zM1325 220h1v1h-1zM1325 224h6v1h-6zM1325 228h1v1h-1zM1325 232h1v1h-1zM1325 236h1v1h-1zM1325 240h1v1h-1zM1325 243h3v1h-3zM1325 247h1v1h-1zM1325 251h1v1h-1zM1325 255h1v1h-1zM1325 259h1v1h-1zM1325 263h6v1h-6zM1325 267h1v1h-1zM1325 271h1v1h-1zM1325 275h1v1h-1zM1325 278h1v1h-1zM1325 282h3v1h-3zM1325 286h1v1h-1zM1325 290h1v1h-1zM1325 294h1v1h-1zM1325 298h1v1h-1zM1325 302h6v1h-6zM1325 306h1v1h-1zM1325 309h1v1h-1zM1325 313h1v1h-1zM1325 317h1v1h-1zM1325 321h3v1h-3zM1325 325h1v1h-1zM1325 329h1v1h-1zM1325 333h1v1h-1zM1325 337h1v1h-1zM1325 340h6v1h-6zM1325 344h1v1h-1zM1325 348h1v1h-1zM1325 352h1v1h-1zM1325 356h1v1h-1zM1325 360h3v1h-3zM1325 364h1v1h-1zM1325 368h1v1h-1zM1325 371h1v1h-1zM1325 375h1v1h-1zM1325 379h6v1h-6zM1325 383h1v1h-1zM1325 387h1v1h-1zM1325 391h1v1h-1zM1325 395h1v1h-1zM1325 399h3v1h-3zM1325 402h1v1h-1zM1325 406h1v1h-1zM1325 410h1v1h-1zM1325 414h1v1h-1zM1325 418h6v1h-6zM1325 422h1v1h-1zM1325 426h1v1h-1zM1325 430h1v1h-1zM1325 433h1v1h-1zM1325 437h3v1h-3zM1325 441h1v1h-1zM1325 445h1v1h-1zM1325 449h1v1h-1zM1325 453h1v1h-1zM1325 457h6v1h-6zM1325 461h1v1h-1zM1325 464h1v1h-1zM1325 468h1v1h-1zM1325 472h1v1h-1zM1325 476h3v1h-3zM1325 480h1v1h-1zM1325 484h1v1h-1zM1325 488h1v1h-1zM1325 492h1v1h-1zM1325 495h6v1h-6zM1325 499h1v1h-1zM1325 503h1v1h-1zM1325 507h1v1h-1zM1325 511h1v1h-1zM1325 515h3v1h-3zM1325 519h1v1h-1zM1325 523h1v1h-1zM1325 527h1v1h-1zM1325 530h1v1h-1zM1325 534h6v1h-6zM1325 538h1v1h-1zM1325 542h1v1h-1zM1325 546h1v1h-1zM1325 550h1v1h-1zM1325 572h3v1h-3zM1325 588h1v1h-1zM1325 603h1v1h-1zM1325 619h1v1h-1zM1325 634h1v1h-1zM1325 666h1v1h-1zM1325 681h1v1h-1zM1325 697h1v1h-1zM1325 712h1v1h-1zM1325 728h3v1h-3z" fill="#000"/></g><text x="1332.5" y="73.5" font-size="13" letter-spacing="-0.25" font-weight="bold" fill="#000">1.150</text><text x="1332.5" y="112.5" font-size="13" letter-spacing="-0.25" font-weight="bold" fill="#000">1.140</text><text x="1332.5" y="151.5" font-size="13" letter-spacing="-0.25" font-weight="bold" fill="#000">1.130</text><text x="1332.5" y="189.5" font-size="13" letter-spacing="-0.25" font-weight="bold" fill="#000">1.120</text><text x="1332.5" y="228.5" font-size="13" letter-spacing="-0.25" font-weight="bold" fill="#000">1.110</text><text x="1332.5" y="267.5" font-size="13" letter-spacing="-0.25" font-weight="bold" fill="#000">1.100</text><text x="1332.5" y="306.5" font-size="13" letter-spacing="-0.25" font-weight="bold" fill="#000">1.090</text><text x="1332.5" y="344.5" font-size="13" letter-spacing="-0.25" font-weight="bold" fill="#000">1.080</text><text x="1332.5" y="383.5" font-size="13" letter-spacing="-0.25" font-weight="bold" fill="#000">1.070</text><text x="1332.5" y="422.5" font-size="13" letter-spacing="-0.25" font-weight="bold" fill="#000">1.060</text><text x="1332.5" y="461.5" font-size="13" letter-spacing="-0.25" font-weight="bold" fill="#000">1.050</text><text x="1332.5" y="499.5" font-size="13" letter-spacing="-0.25" font-weight="bold" fill="#000">1.040</text><text x="1332.5" y="538.5" font-size="13" letter-spacing="-0.25" font-weight="bold" fill="#000">1.030</text><svg x="1324" y="23" width="42" height="8" overflow="hidden"><rect width="42" height="8" fill="#ffffe1"/><text x="8.5" y="4" font-size="12.5" font-weight="bold" fill="#000">1.162</text></svg><rect x="1324" y="30" width="42" height="1" fill="#000"/><svg x="1324" y="31" width="42" height="4" overflow="hidden"><text x="8.5" y="3.5" font-size="12.5" font-weight="bold" fill="#000">1.160</text></svg><rect x="1324" y="642" width="42" height="16" fill="#ffffe1"/><rect x="1324" y="642" width="42" height="1" fill="#000"/><rect x="1324" y="657" width="42" height="1" fill="#000"/><text x="1345" y="655" text-anchor="middle" font-family="Liberation Serif, serif" font-size="14" font-weight="bold" fill="#000">0.00</text><g shape-rendering="crispEdges"><rect x="1345" y="539" width="21" height="16" fill="#c0c0c0"/><rect x="1345" y="539" width="21" height="1" fill="#000"/><rect x="1345" y="539" width="1" height="16" fill="#000"/><rect x="1346" y="540" width="20" height="1" fill="#fff"/><rect x="1346" y="540" width="1" height="15" fill="#fff"/><rect x="1347" y="541" width="5" height="4" fill="#808080"/><rect x="1356" y="542" width="2" height="5" fill="#808080"/></g><path d="M1352 543.5h3.5l1.5-1.5l1.5 1.5h7.5" stroke="#000" stroke-width="1" fill="none"/><path d="M1350.5 545L1347.5 551M1350.5 545L1353.5 551M1364 545L1361 551M1364 545L1367 551" stroke="#000" stroke-width="1" stroke-dasharray="1 1" fill="none"/><path d="M1352.5 545.5L1357.2 549L1362 545.5" stroke="#000" stroke-width="2.4" fill="none"/><path d="M1353 544.5L1357.2 547.6L1361.5 544.5" stroke="#ff0" stroke-width="1.5" fill="none"/><g shape-rendering="crispEdges"><rect x="1355" y="549" width="5" height="5" fill="#000"/><rect x="1356" y="548" width="2" height="5" fill="#ff0"/><rect x="1347" y="552" width="7" height="1" fill="#000"/><rect x="1348" y="550" width="3" height="2" fill="#fff"/><rect x="1350" y="550" width="3" height="2" fill="#ff0"/><rect x="1361" y="552" width="5" height="1" fill="#000"/><rect x="1361" y="550" width="2" height="2" fill="#fff"/><rect x="1363" y="550" width="3" height="2" fill="#ff0"/></g></svg>
<div class="sep" style="top:556px;height:1px;background:#f0f0f0"></div><div class="sep" style="top:557px;height:1px;background:#fff"></div><div class="sep" style="top:558px;height:1px;background:#f0f0f0"></div><div class="sep" style="top:559px;height:1px;background:#f2f2f2"></div><div class="sep" style="top:560px;height:1px;background:#a0a0a0"></div><div class="sep" style="top:561px;height:1px;background:#646464"></div>
<div class="abs" style="left:0.4px;top:562px;line-height:15px">Cycles</div>
<div class="sep" style="top:739px;height:1px;background:#f0f0f0"></div><div class="sep" style="top:740px;height:1px;background:#fff"></div><div class="sep" style="top:741px;height:1px;background:#f0f0f0"></div><div class="sep" style="top:742px;height:1px;background:#f2f2f2"></div><div class="sep" style="top:743px;height:1px;background:#a0a0a0"></div><div class="sep" style="top:744px;height:1px;background:#646464"></div>
<div class="abs" style="left:0;top:745px;width:1322px;height:17px;background:#f0f0f0;border-bottom:1px solid #a0a0a0"></div>
<div class="mt" style="left:1px"></div><div class="ml" style="left:3.5px">Oct</div><div class="mt" style="left:139px"></div><div class="ml" style="left:141.5px">Nov</div><div class="mt" style="left:265px"></div><div class="ml" style="left:267.5px">Dec</div><div class="mt" style="left:397px"></div><div class="ml" style="left:399.5px">2020</div><div class="mt" style="left:535px"></div><div class="ml" style="left:537.5px">Feb</div><div class="mt" style="left:655px"></div><div class="ml" style="left:657.5px">Mar</div><div class="mt" style="left:787px"></div><div class="ml" style="left:789.5px">Apr</div><div class="mt" style="left:919px"></div><div class="ml" style="left:921.5px">May</div>
<div class="abs" style="left:201px;top:746px;width:54px;height:14px;border:1px solid #000;background:#ffffe1;line-height:16px;text-align:center">11/22/19</div>
<div class="abs" style="left:1322px;top:745px;width:1px;height:18px;background:#000"></div>
<div class="abs" style="left:1323px;top:745px;width:43px;height:18px;background:#ffffe1;color:#00f;line-height:20px;text-align:right;box-sizing:border-box;padding-right:2px">#9868</div>
</body></html>
